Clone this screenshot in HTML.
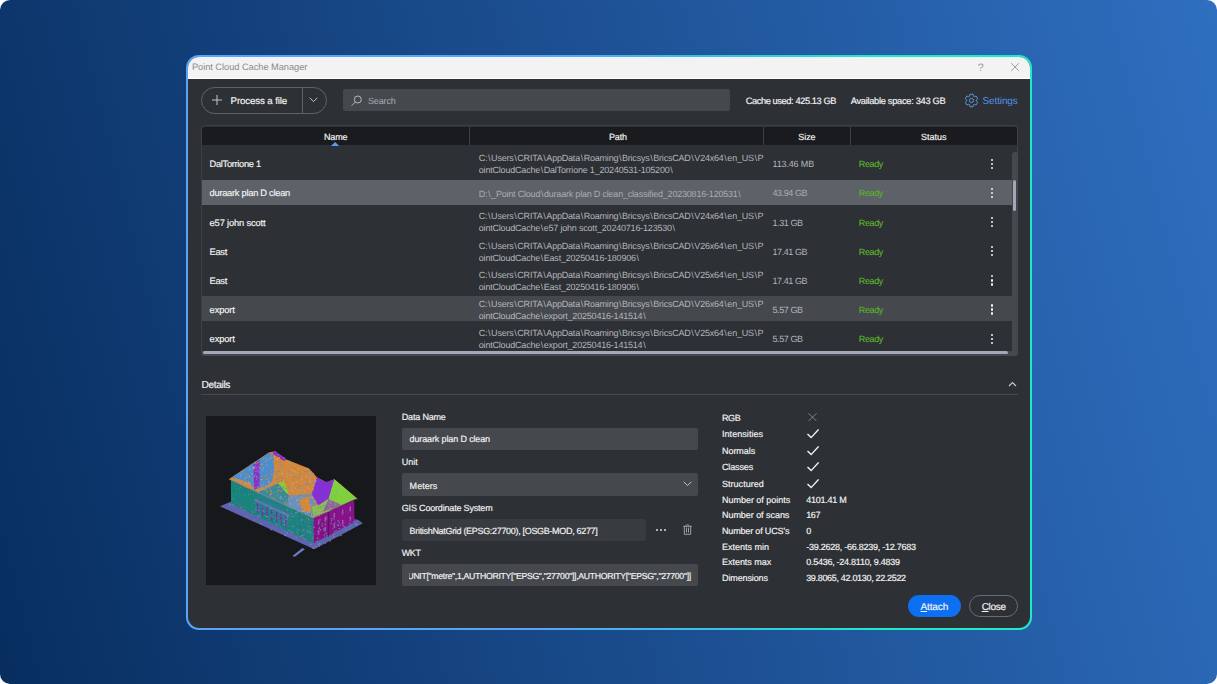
<!DOCTYPE html>
<html lang="en">
<head>
<meta charset="utf-8">
<title>Point Cloud Cache Manager</title>
<style>
*{box-sizing:border-box;margin:0;padding:0}
html,body{width:1217px;height:684px;overflow:hidden;background:#fff}
body{position:relative;font-family:"Liberation Sans",sans-serif;color:#f2f2f2;font-size:9px;text-rendering:geometricPrecision}
.abs,.t{position:absolute}
.t{white-space:nowrap;line-height:12px;height:12px}
.bg{left:0;top:0;width:1216.5px;height:684px;border-radius:10px;background:linear-gradient(76deg,#082e60 0%,#2f6fc0 100%)}
.win{left:186px;top:55px;width:846px;height:575px;border-radius:13px;background:linear-gradient(90deg,#5aa2fa 0%,#58a4f8 42%,#38c0e8 61%,#1eeaca 82%,#1eeaca 100%)}
.inner{position:absolute;left:1.7px;top:1.7px;right:1.7px;bottom:1.6px;border-radius:11.3px;background:#2d3035;overflow:hidden}
.titlebar{left:0;top:0;width:100%;height:22.1px;background:#f3f3f3;border-bottom:1px solid #fff}
.layer{left:0;top:0;width:1217px;height:684px}
.btn{left:201px;top:87.3px;width:126px;height:26.5px;border:1px solid #5f6267;border-radius:14px}
.btn i{position:absolute;left:100px;top:0;width:1px;height:24.5px;background:#5f6267}
.w{color:#f2f2f2;-webkit-text-stroke:0.18px #f2f2f2}
.search{left:342.5px;top:89.3px;width:387.2px;height:21.8px;background:#45484d;border-radius:2px}
.tbl{left:201px;top:125.4px;width:817px;height:230.2px;border:1.1px solid #3d4046;border-radius:3.500px;background:#2d3035;overflow:hidden}
.thead{left:202px;top:126.5px;width:815.2px;height:18.7px;background:#1a1b1e;border-radius:2.500px 2.500px 0 0}
.vsep{top:126.5px;width:1px;height:18.7px;background:#3c3f44}
.rowsel{left:202px;top:180px;width:810.5px;height:25px;background:#5d6168}
.rowhov{left:202px;top:296.2px;width:810.5px;height:25.3px;background:#45484d}
.pt{left:478.8px;font-size:9px;letter-spacing:-0.2px;color:#b3b6bb;line-height:12px;height:auto}
.pt span{margin:0 0.69px}
.kb{left:991.2px;width:3px;height:12px}
.kb b{position:absolute;left:0;width:2.2px;height:2.2px;border-radius:50%;background:#f0f0f0}
u{text-decoration-thickness:0.6px;text-underline-offset:1.2px}
.inp{left:401.5px;width:296.5px;background:#45484d;border-radius:2px}
</style>
</head>
<body>
<div class="abs bg"></div>
<div class="abs win"><div class="inner"><div class="abs titlebar"></div></div></div>
<div class="abs layer">
<div class="t" id="ttl" style="left:191.9px;top:61px;font-size:9.3px;letter-spacing:-0.052px;color:#8b8b8b;">Point Cloud Cache Manager</div>
<div class="t" id="qm" style="left:977.7px;top:62px;font-size:10.8px;color:#979797;">?</div>
<svg class="abs" id="xclose" style="left:1011.4px;top:62.600px" width="8.1" height="8.1" viewBox="0 0 8.4 8.4"><path d="M0.2 0.2L8.2 8.2M8.2 0.2L0.200 8.200" stroke="#858585" stroke-width="0.8" fill="none"/></svg>
<div class="abs btn"><i></i></div>
<svg class="abs" style="left:212.1px;top:95.1px" width="10" height="10" viewBox="0 0 10 10"><path d="M5 0V10M0 5H10" stroke="#cfcfcf" stroke-width="0.95" fill="none"/></svg>
<div class="t w" id="paf" style="left:230.6px;top:96px;font-size:9.7px;letter-spacing:-0.118px;">Process a file</div>
<svg class="abs" style="left:309.1px;top:97.4px" width="9" height="6" viewBox="0 0 9 6"><path d="M0.7 0.8L4.5 4.6L8.3 0.8" stroke="#c8cacd" stroke-width="0.95" fill="none"/></svg>
<div class="abs search"></div>
<svg class="abs" style="left:351.3px;top:94.8px" width="11.5" height="11.5" viewBox="0 0 11.5 11.5"><circle cx="6.8" cy="4.5" r="3.5" stroke="#bcbfc3" stroke-width="0.95" fill="none"/><path d="M4.2 7.1L0.7 10.700" stroke="#bcbfc3" stroke-width="0.95" fill="none"/></svg>
<div class="t" id="srch" style="left:368.0px;top:95px;font-size:9.0px;letter-spacing:-0.139px;color:#a9adb4;">Search</div>
<div class="t w" id="cache" style="left:745.7px;top:95px;font-size:9.3px;letter-spacing:-0.420px;">Cache used: 425.13 GB</div>
<div class="t w" id="avail" style="left:850.8px;top:95px;font-size:9.3px;letter-spacing:-0.307px;">Available space: 343 GB</div>
<svg class="abs" id="gear" style="left:964px;top:92.95px" width="15" height="15" viewBox="0 0 15 15"><path d="M9.43 3.16L9.06 1.24L5.94 1.24L5.57 3.16L4.71 3.66L2.86 3.02L1.30 5.72L2.78 7.00L2.78 8.00L1.30 9.28L2.86 11.98L4.71 11.34L5.57 11.84L5.94 13.76L9.06 13.76L9.43 11.84L10.29 11.34L12.14 11.98L13.70 9.28L12.22 8.00L12.22 7.00L13.70 5.72L12.14 3.02L10.29 3.66Z" fill="none" stroke="#5b9be0" stroke-width="0.95" stroke-linejoin="round"/><circle cx="7.5" cy="7.5" r="2.1" fill="none" stroke="#5b9be0" stroke-width="0.95"/></svg>
<div class="t" id="sett" style="left:982.6px;top:96px;font-size:10px;letter-spacing:-0.143px;color:#4f94e8;">Settings</div>
<div class="abs tbl"></div>
<div class="abs thead"></div>
<div class="abs vsep" style="left:469.1px"></div>
<div class="abs vsep" style="left:763.4px"></div>
<div class="abs vsep" style="left:849.6px"></div>
<div class="t w" id="thName" style="left:324.0px;top:131px;font-size:9.0px;letter-spacing:-0.179px;">Name</div>
<div class="t w" id="thPath" style="left:609.0px;top:131px;font-size:9.0px;letter-spacing:-0.129px;">Path</div>
<div class="t w" id="thSize" style="left:798.3px;top:131px;font-size:9.0px;letter-spacing:-0.079px;">Size</div>
<div class="t w" id="thStatus" style="left:921.0px;top:131px;font-size:9.0px;letter-spacing:-0.019px;">Status</div>
<svg class="abs" style="left:331.4px;top:141.900px" width="8.200" height="4" viewBox="0 0 8.2 4"><path d="M0 4L4.100 0L8.200 4Z" fill="#5a9df0"/></svg>
<div class="abs rowsel"></div><div class="abs rowhov"></div>
<div class="t w" id="nm0" style="left:209.6px;top:158px;font-size:9.3px;letter-spacing:-0.315px;">DalTorrione 1</div>
<div class="t pt" id="pt0" style="top:152.08149999999998px">C:<span>\</span>Users<span>\</span>CRITA<span>\</span>AppData<span>\</span>Roaming<span>\</span>Bricsys<span>\</span>BricsCAD<span>\</span>V24x64<span>\</span>en_US<span>\</span>P<br>ointCloudCache<span>\</span>DalTorrione 1_20240531-105200<span>\</span></div>
<div class="t" id="sz0" style="left:772.5px;top:158px;font-size:9.0px;letter-spacing:-0.153px;color:#b3b6bb;">113.46 MB</div>
<div class="t" id="rd0" style="left:858.8px;top:158px;font-size:9.0px;letter-spacing:-0.363px;color:#5cb02c;-webkit-text-stroke:0.12px #5cb02c;">Ready</div>
<div class="abs kb" style="top:158.65px"><b style="top:0"></b><b style="top:4.1px"></b><b style="top:8.1px"></b></div>
<div class="t w" id="nm1" style="left:209.6px;top:187px;font-size:9.3px;letter-spacing:-0.270px;">duraark plan D clean</div>
<div class="t pt" id="pt1" style="color:#abaeb3;top:187.5315px">D:<span>\</span>_Point Cloud<span>\</span>duraark plan D clean_classified_20230816-120531<span>\</span></div>
<div class="t" id="sz1" style="left:772.5px;top:187px;font-size:9.0px;letter-spacing:-0.420px;color:#abaeb3;">43.94 GB</div>
<div class="t" id="rd1" style="left:858.8px;top:187px;font-size:9.0px;letter-spacing:-0.363px;color:#5cb02c;-webkit-text-stroke:0.12px #5cb02c;">Ready</div>
<div class="abs kb" style="top:187.80px"><b style="top:0"></b><b style="top:4.1px"></b><b style="top:8.1px"></b></div>
<div class="t w" id="nm2" style="left:209.6px;top:217px;font-size:9.3px;letter-spacing:-0.142px;">e57 john scott</div>
<div class="t pt" id="pt2" style="top:210.3815px">C:<span>\</span>Users<span>\</span>CRITA<span>\</span>AppData<span>\</span>Roaming<span>\</span>Bricsys<span>\</span>BricsCAD<span>\</span>V24x64<span>\</span>en_US<span>\</span>P<br>ointCloudCache<span>\</span>e57 john scott_20240716-123530<span>\</span></div>
<div class="t" id="sz2" style="left:772.5px;top:217px;font-size:9.0px;letter-spacing:-0.420px;color:#b3b6bb;">1.31 GB</div>
<div class="t" id="rd2" style="left:858.8px;top:217px;font-size:9.0px;letter-spacing:-0.363px;color:#5cb02c;-webkit-text-stroke:0.12px #5cb02c;">Ready</div>
<div class="abs kb" style="top:216.95px"><b style="top:0"></b><b style="top:4.1px"></b><b style="top:8.1px"></b></div>
<div class="t w" id="nm3" style="left:209.6px;top:246px;font-size:9.3px;letter-spacing:-0.327px;">East</div>
<div class="t pt" id="pt3" style="top:239.53149999999997px">C:<span>\</span>Users<span>\</span>CRITA<span>\</span>AppData<span>\</span>Roaming<span>\</span>Bricsys<span>\</span>BricsCAD<span>\</span>V26x64<span>\</span>en_US<span>\</span>P<br>ointCloudCache<span>\</span>East_20250416-180906<span>\</span></div>
<div class="t" id="sz3" style="left:772.5px;top:246px;font-size:9.0px;letter-spacing:-0.420px;color:#b3b6bb;">17.41 GB</div>
<div class="t" id="rd3" style="left:858.8px;top:246px;font-size:9.0px;letter-spacing:-0.363px;color:#5cb02c;-webkit-text-stroke:0.12px #5cb02c;">Ready</div>
<div class="abs kb" style="top:246.10px"><b style="top:0"></b><b style="top:4.1px"></b><b style="top:8.1px"></b></div>
<div class="t w" id="nm4" style="left:209.6px;top:275px;font-size:9.3px;letter-spacing:-0.327px;">East</div>
<div class="t pt" id="pt4" style="top:268.6815px">C:<span>\</span>Users<span>\</span>CRITA<span>\</span>AppData<span>\</span>Roaming<span>\</span>Bricsys<span>\</span>BricsCAD<span>\</span>V25x64<span>\</span>en_US<span>\</span>P<br>ointCloudCache<span>\</span>East_20250416-180906<span>\</span></div>
<div class="t" id="sz4" style="left:772.5px;top:275px;font-size:9.0px;letter-spacing:-0.420px;color:#b3b6bb;">17.41 GB</div>
<div class="t" id="rd4" style="left:858.8px;top:275px;font-size:9.0px;letter-spacing:-0.363px;color:#5cb02c;-webkit-text-stroke:0.12px #5cb02c;">Ready</div>
<div class="abs kb" style="top:275.25px"><b style="top:0"></b><b style="top:4.1px"></b><b style="top:8.1px"></b></div>
<div class="t w" id="nm5" style="left:209.6px;top:304px;font-size:9.3px;letter-spacing:-0.107px;">export</div>
<div class="t pt" id="pt5" style="top:297.8315px">C:<span>\</span>Users<span>\</span>CRITA<span>\</span>AppData<span>\</span>Roaming<span>\</span>Bricsys<span>\</span>BricsCAD<span>\</span>V26x64<span>\</span>en_US<span>\</span>P<br>ointCloudCache<span>\</span>export_20250416-141514<span>\</span></div>
<div class="t" id="sz5" style="left:772.5px;top:304px;font-size:9.0px;letter-spacing:-0.420px;color:#b3b6bb;">5.57 GB</div>
<div class="t" id="rd5" style="left:858.8px;top:304px;font-size:9.0px;letter-spacing:-0.363px;color:#5cb02c;-webkit-text-stroke:0.12px #5cb02c;">Ready</div>
<div class="abs kb" style="top:304.40px"><b style="top:0"></b><b style="top:4.1px"></b><b style="top:8.1px"></b></div>
<div class="t w" id="nm6" style="left:209.6px;top:333px;font-size:9.3px;letter-spacing:-0.107px;">export</div>
<div class="t pt" id="pt6" style="top:326.9815px">C:<span>\</span>Users<span>\</span>CRITA<span>\</span>AppData<span>\</span>Roaming<span>\</span>Bricsys<span>\</span>BricsCAD<span>\</span>V25x64<span>\</span>en_US<span>\</span>P<br>ointCloudCache<span>\</span>export_20250416-141514<span>\</span></div>
<div class="t" id="sz6" style="left:772.5px;top:333px;font-size:9.0px;letter-spacing:-0.420px;color:#b3b6bb;">5.57 GB</div>
<div class="t" id="rd6" style="left:858.8px;top:333px;font-size:9.0px;letter-spacing:-0.363px;color:#5cb02c;-webkit-text-stroke:0.12px #5cb02c;">Ready</div>
<div class="abs kb" style="top:333.55px"><b style="top:0"></b><b style="top:4.1px"></b><b style="top:8.1px"></b></div>
<div class="abs" style="left:1012.2px;top:151.5px;width:5.6px;height:202px;background:#45484d;border-radius:2.800px 2.800px 0 0"></div>
<div class="abs" style="left:1013.1px;top:179.5px;width:3.1px;height:31.1px;background:#a3a8b8;border-radius:1.600px"></div>
<div class="abs" style="left:202px;top:350.6px;width:815.8px;height:5px;background:#45484d;border-radius:0 0 2.500px 2px"></div>
<div class="abs" style="left:202.9px;top:351.2px;width:805.6px;height:3.3px;background:#a3a8b8;border-radius:1.700px"></div>
<div class="t w" id="det" style="left:201.5px;top:380px;font-size:10.2px;letter-spacing:-0.377px;">Details</div>
<div class="abs" style="left:201px;top:394px;width:817px;height:1px;background:#46494e"></div>
<svg class="abs" style="left:1007.5px;top:381px" width="9" height="6" viewBox="0 0 9 6"><path d="M1 5L4.500 1.500L8 5" stroke="#c8cacd" stroke-width="1.200" fill="none"/></svg>
<div class="abs" style="left:206.2px;top:416px;width:169.6px;height:169px;background:#17181c"></div>
<svg class="abs" id="thumb" style="left:215px;top:445px" width="155" height="115" viewBox="0 0 922 684">
<polygon points="30,365 100,335 850,445 880,465 590,620" fill="#5e64b0"/>
<path d="M460 660L520 612L535 620L475 665Z" fill="#6f78c8"/>
<polygon points="95,210 585,430 585,585 95,350" fill="#178579"/>
<polygon points="585,430 828,330 830,458 588,585" fill="#86128a"/>
<polygon points="235,275 445,372 445,490 235,395" fill="#257f88"/>
<polygon points="235,318 445,415 445,432 235,335" fill="#5a7ab0"/>
<rect x="250" y="345" width="8" height="66" fill="#7a2aa8"/>
<rect x="278" y="358" width="8" height="66" fill="#7a2aa8"/>
<rect x="306" y="371" width="8" height="66" fill="#7a2aa8"/>
<rect x="334" y="384" width="8" height="66" fill="#7a2aa8"/>
<rect x="362" y="397" width="8" height="66" fill="#7a2aa8"/>
<rect x="390" y="410" width="8" height="66" fill="#7a2aa8"/>
<rect x="418" y="423" width="8" height="66" fill="#7a2aa8"/>
<rect x="125" y="240" width="8" height="30" fill="#3a6f9a"/>
<rect x="160" y="255" width="8" height="30" fill="#3a6f9a"/>
<rect x="195" y="272" width="8" height="30" fill="#3a6f9a"/>
<rect x="125" y="300" width="8" height="30" fill="#3a6f9a"/>
<rect x="160" y="315" width="8" height="30" fill="#3a6f9a"/>
<rect x="195" y="332" width="8" height="30" fill="#3a6f9a"/>
<rect x="470" y="410" width="8" height="30" fill="#3a6f9a"/>
<rect x="505" y="425" width="8" height="30" fill="#3a6f9a"/>
<rect x="540" y="442" width="8" height="30" fill="#3a6f9a"/>
<rect x="470" y="470" width="8" height="30" fill="#3a6f9a"/>
<rect x="505" y="487" width="8" height="30" fill="#3a6f9a"/>
<rect x="540" y="503" width="8" height="30" fill="#3a6f9a"/>
<rect x="612" y="445" width="9" height="28" fill="#a85aa8"/>
<rect x="652" y="428" width="9" height="28" fill="#a85aa8"/>
<rect x="705" y="405" width="9" height="28" fill="#a85aa8"/>
<rect x="755" y="385" width="9" height="28" fill="#a85aa8"/>
<rect x="800" y="366" width="9" height="28" fill="#a85aa8"/>
<rect x="612" y="505" width="9" height="28" fill="#a85aa8"/>
<rect x="652" y="488" width="9" height="28" fill="#a85aa8"/>
<rect x="705" y="465" width="9" height="28" fill="#a85aa8"/>
<rect x="755" y="445" width="9" height="28" fill="#a85aa8"/>
<rect x="800" y="426" width="9" height="28" fill="#a85aa8"/>
<rect x="672" y="395" width="6" height="150" fill="#5f0f66"/>
<polygon points="84,202 320,45 358,37 428,87 560,140 606,192 662,221 710,204 843,316 585,432" fill="#d4883c"/>
<polygon points="100,194 320,46 348,60 352,140 340,215 300,248 236,265 205,228 150,206" fill="#4a8ed0"/>
<polygon points="84,202 150,206 205,228 236,268 200,258" fill="#d4883c"/>
<polygon points="227,115 265,88 265,247 233,268" fill="#8a2ecc"/>
<polygon points="338,49 358,37 428,87 407,94" fill="#8a2ecc"/>
<polygon points="373,227 411,213 439,293 421,282" fill="#7ed23c"/>
<polygon points="324,252 373,227 421,282 440,300 430,365 250,282" fill="#3a8a98"/>
<polygon points="440,300 575,291 600,360 585,432 430,365" fill="#6a90c0"/>
<polygon points="500,330 560,300 572,400 520,392" fill="#d4883c"/>
<polygon points="606,193 662,221 710,204 676,319 613,360 575,291" fill="#8430d4"/>
<polygon points="710,204 843,316 752,357 676,319" fill="#7ed23c"/>
<polygon points="575,361 613,361 676,319 711,354 676,395 585,423" fill="#86c050"/>
<polygon points="676,319 752,357 700,376 640,398" fill="#8a6a9a"/>
<rect x="427" y="258" width="6" height="6" fill="#d4883c"/>
<rect x="437" y="238" width="6" height="6" fill="#c07830"/>
<rect x="445" y="280" width="6" height="6" fill="#4a8ed0"/>
<rect x="155" y="157" width="6" height="6" fill="#d4883c"/>
<rect x="493" y="389" width="6" height="6" fill="#9ab0c8"/>
<rect x="436" y="211" width="6" height="6" fill="#d4883c"/>
<rect x="232" y="129" width="6" height="6" fill="#e8a860"/>
<rect x="463" y="299" width="6" height="6" fill="#6aa0d8"/>
<rect x="581" y="198" width="6" height="6" fill="#c07830"/>
<rect x="258" y="151" width="6" height="6" fill="#d4883c"/>
<rect x="166" y="152" width="6" height="6" fill="#d4883c"/>
<rect x="150" y="168" width="6" height="6" fill="#6aa0d8"/>
<rect x="219" y="258" width="6" height="6" fill="#6aa0d8"/>
<rect x="375" y="193" width="6" height="6" fill="#4a8ed0"/>
<rect x="541" y="265" width="6" height="6" fill="#d4883c"/>
<rect x="334" y="154" width="6" height="6" fill="#d4883c"/>
<rect x="364" y="283" width="6" height="6" fill="#4a8ed0"/>
<rect x="520" y="379" width="6" height="6" fill="#4a8ed0"/>
<rect x="560" y="160" width="6" height="6" fill="#4a8ed0"/>
<rect x="542" y="203" width="6" height="6" fill="#d4883c"/>
<rect x="167" y="239" width="6" height="6" fill="#e8a860"/>
<rect x="537" y="153" width="6" height="6" fill="#4a8ed0"/>
<rect x="180" y="226" width="6" height="6" fill="#9ab0c8"/>
<rect x="288" y="213" width="6" height="6" fill="#d4883c"/>
<rect x="426" y="168" width="6" height="6" fill="#9ab0c8"/>
<rect x="616" y="417" width="6" height="6" fill="#d4883c"/>
<rect x="428" y="182" width="6" height="6" fill="#d4883c"/>
<rect x="604" y="393" width="6" height="6" fill="#d4883c"/>
<rect x="400" y="167" width="6" height="6" fill="#9ab0c8"/>
<rect x="435" y="251" width="6" height="6" fill="#c07830"/>
<rect x="540" y="227" width="6" height="6" fill="#4a8ed0"/>
<rect x="363" y="94" width="6" height="6" fill="#c07830"/>
<rect x="238" y="104" width="6" height="6" fill="#e8a860"/>
<rect x="585" y="212" width="6" height="6" fill="#4a8ed0"/>
<rect x="332" y="300" width="6" height="6" fill="#4a8ed0"/>
<rect x="565" y="354" width="6" height="6" fill="#d4883c"/>
<rect x="376" y="267" width="6" height="6" fill="#e8a860"/>
<rect x="170" y="223" width="6" height="6" fill="#4a8ed0"/>
<rect x="479" y="302" width="6" height="6" fill="#9ab0c8"/>
<rect x="517" y="159" width="6" height="6" fill="#d4883c"/>
<rect x="512" y="290" width="6" height="6" fill="#6aa0d8"/>
<rect x="562" y="213" width="6" height="6" fill="#9ab0c8"/>
<rect x="490" y="290" width="6" height="6" fill="#e8a860"/>
<rect x="235" y="225" width="6" height="6" fill="#4a8ed0"/>
<rect x="378" y="215" width="6" height="6" fill="#4a8ed0"/>
<rect x="559" y="396" width="6" height="6" fill="#6aa0d8"/>
<rect x="501" y="295" width="6" height="6" fill="#c07830"/>
<rect x="436" y="294" width="6" height="6" fill="#4a8ed0"/>
<rect x="380" y="72" width="6" height="6" fill="#e8a860"/>
<rect x="492" y="349" width="6" height="6" fill="#e8a860"/>
<rect x="404" y="146" width="6" height="6" fill="#d4883c"/>
<rect x="489" y="308" width="6" height="6" fill="#4a8ed0"/>
<rect x="599" y="211" width="6" height="6" fill="#6aa0d8"/>
<rect x="523" y="309" width="6" height="6" fill="#d4883c"/>
<rect x="252" y="245" width="6" height="6" fill="#e8a860"/>
<rect x="209" y="240" width="6" height="6" fill="#c07830"/>
<rect x="547" y="157" width="6" height="6" fill="#4a8ed0"/>
<rect x="491" y="236" width="6" height="6" fill="#c07830"/>
<rect x="370" y="250" width="6" height="6" fill="#d4883c"/>
<rect x="476" y="195" width="6" height="6" fill="#d4883c"/>
<rect x="391" y="134" width="6" height="6" fill="#6aa0d8"/>
<rect x="180" y="208" width="6" height="6" fill="#d4883c"/>
<rect x="270" y="234" width="6" height="6" fill="#6aa0d8"/>
<rect x="471" y="136" width="6" height="6" fill="#4a8ed0"/>
<rect x="616" y="384" width="6" height="6" fill="#d4883c"/>
<rect x="369" y="200" width="6" height="6" fill="#c07830"/>
<rect x="551" y="250" width="6" height="6" fill="#d4883c"/>
<rect x="563" y="289" width="6" height="6" fill="#c07830"/>
<rect x="248" y="251" width="6" height="6" fill="#c07830"/>
<rect x="646" y="357" width="6" height="6" fill="#4a8ed0"/>
<rect x="324" y="161" width="6" height="6" fill="#4a8ed0"/>
<rect x="281" y="75" width="6" height="6" fill="#d4883c"/>
<rect x="561" y="353" width="6" height="6" fill="#d4883c"/>
<rect x="172" y="237" width="6" height="6" fill="#d4883c"/>
<rect x="716" y="354" width="6" height="6" fill="#6aa0d8"/>
<rect x="503" y="240" width="6" height="6" fill="#c07830"/>
<rect x="449" y="112" width="6" height="6" fill="#d4883c"/>
<rect x="438" y="241" width="6" height="6" fill="#6aa0d8"/>
<rect x="243" y="184" width="6" height="6" fill="#9ab0c8"/>
<rect x="616" y="370" width="6" height="6" fill="#4a8ed0"/>
<rect x="394" y="179" width="6" height="6" fill="#e8a860"/>
<rect x="392" y="114" width="6" height="6" fill="#4a8ed0"/>
<rect x="330" y="71" width="6" height="6" fill="#d4883c"/>
<rect x="619" y="377" width="6" height="6" fill="#9ab0c8"/>
<rect x="229" y="268" width="6" height="6" fill="#e8a860"/>
<rect x="674" y="359" width="6" height="6" fill="#6aa0d8"/>
<rect x="185" y="167" width="6" height="6" fill="#c07830"/>
<rect x="343" y="222" width="6" height="6" fill="#d4883c"/>
<rect x="311" y="122" width="6" height="6" fill="#6aa0d8"/>
<rect x="516" y="248" width="6" height="6" fill="#6aa0d8"/>
<rect x="475" y="234" width="6" height="6" fill="#4a8ed0"/>
<rect x="551" y="329" width="6" height="6" fill="#e8a860"/>
<rect x="421" y="236" width="6" height="6" fill="#d4883c"/>
<rect x="232" y="185" width="6" height="6" fill="#d4883c"/>
<rect x="280" y="146" width="6" height="6" fill="#e8a860"/>
<rect x="501" y="238" width="6" height="6" fill="#c07830"/>
<rect x="568" y="357" width="6" height="6" fill="#d4883c"/>
<rect x="501" y="301" width="6" height="6" fill="#d4883c"/>
<rect x="537" y="207" width="6" height="6" fill="#6aa0d8"/>
<rect x="403" y="245" width="6" height="6" fill="#c07830"/>
<rect x="321" y="247" width="6" height="6" fill="#6aa0d8"/>
<rect x="581" y="258" width="6" height="6" fill="#e8a860"/>
<rect x="588" y="332" width="6" height="6" fill="#d4883c"/>
<rect x="269" y="244" width="6" height="6" fill="#d4883c"/>
<rect x="558" y="217" width="6" height="6" fill="#4a8ed0"/>
<rect x="201" y="181" width="6" height="6" fill="#4a8ed0"/>
<rect x="591" y="217" width="6" height="6" fill="#e8a860"/>
<rect x="569" y="306" width="6" height="6" fill="#e8a860"/>
<rect x="357" y="144" width="6" height="6" fill="#9ab0c8"/>
<rect x="228" y="147" width="6" height="6" fill="#4a8ed0"/>
<rect x="228" y="135" width="6" height="6" fill="#9ab0c8"/>
<rect x="290" y="205" width="6" height="6" fill="#c07830"/>
<rect x="451" y="177" width="6" height="6" fill="#e8a860"/>
<rect x="557" y="341" width="6" height="6" fill="#4a8ed0"/>
<rect x="421" y="332" width="6" height="6" fill="#6aa0d8"/>
<rect x="580" y="428" width="6" height="6" fill="#e8a860"/>
<rect x="580" y="266" width="6" height="6" fill="#6aa0d8"/>
<rect x="452" y="308" width="6" height="6" fill="#e8a860"/>
<rect x="542" y="312" width="6" height="6" fill="#6aa0d8"/>
<rect x="299" y="93" width="6" height="6" fill="#e8a860"/>
<rect x="583" y="166" width="6" height="6" fill="#d4883c"/>
<rect x="329" y="211" width="6" height="6" fill="#c07830"/>
<rect x="325" y="195" width="6" height="6" fill="#9ab0c8"/>
<rect x="359" y="181" width="6" height="6" fill="#e8a860"/>
<rect x="688" y="329" width="6" height="6" fill="#e8a860"/>
<rect x="497" y="261" width="6" height="6" fill="#d4883c"/>
<rect x="578" y="355" width="6" height="6" fill="#d4883c"/>
<rect x="526" y="158" width="6" height="6" fill="#c07830"/>
<rect x="643" y="392" width="6" height="6" fill="#d4883c"/>
<rect x="404" y="318" width="6" height="6" fill="#6aa0d8"/>
<rect x="492" y="322" width="6" height="6" fill="#9ab0c8"/>
<rect x="371" y="72" width="6" height="6" fill="#6aa0d8"/>
<rect x="482" y="317" width="6" height="6" fill="#d4883c"/>
<rect x="379" y="246" width="6" height="6" fill="#e8a860"/>
<rect x="318" y="82" width="6" height="6" fill="#9ab0c8"/>
<rect x="234" y="179" width="6" height="6" fill="#c07830"/>
<rect x="224" y="148" width="6" height="6" fill="#4a8ed0"/>
<rect x="560" y="409" width="6" height="6" fill="#c07830"/>
<rect x="448" y="140" width="6" height="6" fill="#6aa0d8"/>
<rect x="450" y="124" width="6" height="6" fill="#d4883c"/>
<rect x="687" y="343" width="6" height="6" fill="#d4883c"/>
<rect x="443" y="184" width="6" height="6" fill="#d4883c"/>
<rect x="271" y="203" width="6" height="6" fill="#d4883c"/>
<rect x="328" y="139" width="6" height="6" fill="#d4883c"/>
<rect x="351" y="280" width="6" height="6" fill="#c07830"/>
<rect x="158" y="227" width="6" height="6" fill="#6aa0d8"/>
<rect x="496" y="237" width="6" height="6" fill="#d4883c"/>
<rect x="496" y="245" width="6" height="6" fill="#4a8ed0"/>
<rect x="324" y="197" width="6" height="6" fill="#c07830"/>
<rect x="316" y="222" width="6" height="6" fill="#9ab0c8"/>
<rect x="597" y="332" width="6" height="6" fill="#d4883c"/>
<rect x="512" y="218" width="6" height="6" fill="#d4883c"/>
<rect x="630" y="393" width="6" height="6" fill="#4a8ed0"/>
<rect x="304" y="186" width="6" height="6" fill="#c07830"/>
<rect x="370" y="80" width="6" height="6" fill="#e8a860"/>
<rect x="221" y="196" width="6" height="6" fill="#d4883c"/>
<rect x="436" y="315" width="6" height="6" fill="#d4883c"/>
<rect x="256" y="99" width="6" height="6" fill="#d4883c"/>
<rect x="413" y="342" width="6" height="6" fill="#e8a860"/>
<rect x="472" y="293" width="6" height="6" fill="#d4883c"/>
<rect x="557" y="324" width="6" height="6" fill="#c07830"/>
<rect x="335" y="172" width="6" height="6" fill="#9ab0c8"/>
<rect x="419" y="257" width="6" height="6" fill="#4a8ed0"/>
<rect x="471" y="348" width="6" height="6" fill="#d4883c"/>
<rect x="277" y="250" width="6" height="6" fill="#e8a860"/>
<rect x="500" y="176" width="6" height="6" fill="#c07830"/>
<rect x="474" y="264" width="6" height="6" fill="#4a8ed0"/>
<rect x="627" y="367" width="6" height="6" fill="#4a8ed0"/>
<rect x="585" y="344" width="6" height="6" fill="#4a8ed0"/>
<rect x="270" y="265" width="6" height="6" fill="#9ab0c8"/>
<rect x="337" y="73" width="6" height="6" fill="#d4883c"/>
<rect x="358" y="220" width="6" height="6" fill="#d4883c"/>
<rect x="427" y="325" width="6" height="6" fill="#4a8ed0"/>
<rect x="510" y="258" width="6" height="6" fill="#e8a860"/>
<rect x="360" y="103" width="6" height="6" fill="#c07830"/>
<rect x="593" y="328" width="6" height="6" fill="#6aa0d8"/>
<rect x="551" y="290" width="6" height="6" fill="#d4883c"/>
<rect x="439" y="93" width="6" height="6" fill="#6aa0d8"/>
<rect x="174" y="197" width="6" height="6" fill="#e8a860"/>
<rect x="479" y="141" width="6" height="6" fill="#c07830"/>
<rect x="679" y="322" width="6" height="6" fill="#d4883c"/>
<rect x="539" y="223" width="6" height="6" fill="#6aa0d8"/>
<rect x="513" y="198" width="6" height="6" fill="#e8a860"/>
<rect x="394" y="208" width="6" height="6" fill="#c07830"/>
<rect x="335" y="243" width="6" height="6" fill="#6aa0d8"/>
<rect x="538" y="334" width="6" height="6" fill="#e8a860"/>
<rect x="498" y="296" width="6" height="6" fill="#4a8ed0"/>
<rect x="639" y="381" width="6" height="6" fill="#e8a860"/>
<rect x="311" y="165" width="6" height="6" fill="#d4883c"/>
<rect x="419" y="215" width="6" height="6" fill="#c07830"/>
<rect x="386" y="178" width="6" height="6" fill="#c07830"/>
<rect x="259" y="158" width="6" height="6" fill="#6aa0d8"/>
<rect x="241" y="154" width="6" height="6" fill="#9ab0c8"/>
<rect x="443" y="105" width="6" height="6" fill="#9ab0c8"/>
<rect x="233" y="109" width="6" height="6" fill="#4a8ed0"/>
<rect x="465" y="154" width="6" height="6" fill="#e8a860"/>
<rect x="367" y="298" width="6" height="6" fill="#d4883c"/>
<rect x="485" y="247" width="6" height="6" fill="#d4883c"/>
<rect x="492" y="204" width="6" height="6" fill="#c07830"/>
<rect x="296" y="254" width="6" height="6" fill="#4a8ed0"/>
<rect x="327" y="228" width="6" height="6" fill="#d4883c"/>
<rect x="476" y="237" width="6" height="6" fill="#d4883c"/>
<rect x="535" y="342" width="6" height="6" fill="#d4883c"/>
<rect x="418" y="342" width="6" height="6" fill="#d4883c"/>
<rect x="281" y="252" width="6" height="6" fill="#d4883c"/>
<rect x="524" y="234" width="6" height="6" fill="#d4883c"/>
<rect x="124" y="214" width="6" height="6" fill="#4a8ed0"/>
<rect x="331" y="277" width="6" height="6" fill="#c07830"/>
<rect x="461" y="209" width="6" height="6" fill="#6aa0d8"/>
<rect x="633" y="375" width="6" height="6" fill="#d4883c"/>
<rect x="516" y="252" width="6" height="6" fill="#d4883c"/>
<rect x="125" y="205" width="6" height="6" fill="#9ab0c8"/>
<rect x="323" y="282" width="6" height="6" fill="#c07830"/>
<rect x="677" y="339" width="6" height="6" fill="#6aa0d8"/>
<rect x="214" y="138" width="6" height="6" fill="#4a8ed0"/>
<rect x="461" y="297" width="6" height="6" fill="#c07830"/>
<rect x="396" y="181" width="6" height="6" fill="#4a8ed0"/>
<rect x="618" y="415" width="6" height="6" fill="#4a8ed0"/>
<rect x="456" y="338" width="6" height="6" fill="#4a8ed0"/>
<rect x="194" y="217" width="6" height="6" fill="#9ab0c8"/>
<rect x="395" y="245" width="6" height="6" fill="#d4883c"/>
<rect x="382" y="155" width="6" height="6" fill="#6aa0d8"/>
<rect x="308" y="84" width="6" height="6" fill="#d4883c"/>
<rect x="267" y="219" width="6" height="6" fill="#4a8ed0"/>
<rect x="360" y="170" width="6" height="6" fill="#c07830"/>
<rect x="250" y="100" width="6" height="6" fill="#c07830"/>
<rect x="344" y="311" width="6" height="6" fill="#d4883c"/>
<rect x="371" y="56" width="6" height="6" fill="#6aa0d8"/>
<rect x="348" y="110" width="6" height="6" fill="#c07830"/>
<rect x="388" y="272" width="6" height="6" fill="#d4883c"/>
<rect x="318" y="214" width="6" height="6" fill="#9ab0c8"/>
<rect x="600" y="378" width="6" height="6" fill="#4a8ed0"/>
<rect x="494" y="203" width="6" height="6" fill="#d4883c"/>
<rect x="222" y="141" width="6" height="6" fill="#6aa0d8"/>
<rect x="515" y="294" width="6" height="6" fill="#4a8ed0"/>
<rect x="288" y="180" width="6" height="6" fill="#4a8ed0"/>
<rect x="373" y="138" width="6" height="6" fill="#c07830"/>
<rect x="545" y="230" width="6" height="6" fill="#4a8ed0"/>
<rect x="406" y="252" width="6" height="6" fill="#4a8ed0"/>
<rect x="476" y="254" width="6" height="6" fill="#e8a860"/>
<rect x="392" y="190" width="6" height="6" fill="#d4883c"/>
<rect x="354" y="78" width="6" height="6" fill="#e8a860"/>
<rect x="346" y="122" width="6" height="6" fill="#d4883c"/>
<rect x="662" y="331" width="6" height="6" fill="#9ab0c8"/>
<rect x="593" y="400" width="6" height="6" fill="#4a8ed0"/>
<rect x="508" y="177" width="6" height="6" fill="#d4883c"/>
<rect x="152" y="206" width="6" height="6" fill="#6aa0d8"/>
<rect x="458" y="231" width="6" height="6" fill="#e8a860"/>
<rect x="350" y="318" width="6" height="6" fill="#c07830"/>
<rect x="155" y="172" width="6" height="6" fill="#6aa0d8"/>
<rect x="290" y="186" width="6" height="6" fill="#d4883c"/>
<rect x="529" y="222" width="6" height="6" fill="#e8a860"/>
<rect x="367" y="154" width="6" height="6" fill="#d4883c"/>
<rect x="440" y="280" width="6" height="6" fill="#e8a860"/>
<rect x="136" y="220" width="6" height="6" fill="#6aa0d8"/>
<rect x="469" y="159" width="6" height="6" fill="#e8a860"/>
<rect x="544" y="144" width="6" height="6" fill="#e8a860"/>
<rect x="383" y="132" width="6" height="6" fill="#6aa0d8"/>
<rect x="385" y="99" width="6" height="6" fill="#4a8ed0"/>
<rect x="556" y="231" width="6" height="6" fill="#c07830"/>
<rect x="307" y="201" width="6" height="6" fill="#e8a860"/>
<rect x="264" y="135" width="6" height="6" fill="#e8a860"/>
<rect x="620" y="399" width="6" height="6" fill="#9ab0c8"/>
<rect x="427" y="342" width="6" height="6" fill="#6aa0d8"/>
<rect x="397" y="227" width="6" height="6" fill="#e8a860"/>
<rect x="277" y="237" width="6" height="6" fill="#d4883c"/>
<rect x="566" y="182" width="6" height="6" fill="#9ab0c8"/>
<rect x="332" y="169" width="6" height="6" fill="#d4883c"/>
<rect x="239" y="260" width="6" height="6" fill="#4a8ed0"/>
<rect x="515" y="203" width="6" height="6" fill="#9ab0c8"/>
<rect x="288" y="101" width="6" height="6" fill="#4a8ed0"/>
<rect x="370" y="301" width="6" height="6" fill="#4a8ed0"/>
<rect x="579" y="422" width="6" height="6" fill="#6aa0d8"/>
<rect x="563" y="194" width="6" height="6" fill="#9ab0c8"/>
<rect x="175" y="167" width="6" height="6" fill="#d4883c"/>
<rect x="506" y="391" width="6" height="6" fill="#6aa0d8"/>
<rect x="412" y="97" width="6" height="6" fill="#d4883c"/>
<rect x="289" y="262" width="6" height="6" fill="#e8a860"/>
<rect x="559" y="145" width="6" height="6" fill="#4a8ed0"/>
<rect x="503" y="258" width="6" height="6" fill="#4a8ed0"/>
<rect x="319" y="68" width="6" height="6" fill="#4a8ed0"/>
<rect x="339" y="92" width="6" height="6" fill="#d4883c"/>
<rect x="452" y="201" width="6" height="6" fill="#d4883c"/>
<rect x="509" y="257" width="6" height="6" fill="#4a8ed0"/>
<rect x="502" y="296" width="6" height="6" fill="#c07830"/>
<rect x="276" y="112" width="6" height="6" fill="#e8a860"/>
<rect x="319" y="240" width="6" height="6" fill="#d4883c"/>
<rect x="285" y="134" width="6" height="6" fill="#9ab0c8"/>
<rect x="460" y="159" width="6" height="6" fill="#c07830"/>
<rect x="712" y="340" width="6" height="6" fill="#d4883c"/>
<rect x="389" y="316" width="6" height="6" fill="#e8a860"/>
<rect x="468" y="146" width="6" height="6" fill="#e8a860"/>
<rect x="560" y="215" width="6" height="6" fill="#e8a860"/>
<rect x="328" y="74" width="6" height="6" fill="#e8a860"/>
<rect x="246" y="108" width="6" height="6" fill="#d4883c"/>
<rect x="350" y="207" width="6" height="6" fill="#d4883c"/>
<rect x="523" y="164" width="6" height="6" fill="#6aa0d8"/>
<rect x="394" y="316" width="6" height="6" fill="#4a8ed0"/>
<rect x="552" y="173" width="6" height="6" fill="#6aa0d8"/>
<rect x="467" y="261" width="6" height="6" fill="#d4883c"/>
<rect x="465" y="185" width="6" height="6" fill="#c07830"/>
<rect x="519" y="241" width="6" height="6" fill="#d4883c"/>
<rect x="485" y="215" width="6" height="6" fill="#e8a860"/>
<rect x="534" y="272" width="6" height="6" fill="#e8a860"/>
<rect x="199" y="222" width="6" height="6" fill="#e8a860"/>
<rect x="457" y="129" width="6" height="6" fill="#d4883c"/>
<rect x="282" y="110" width="6" height="6" fill="#d4883c"/>
<rect x="491" y="379" width="6" height="6" fill="#4a8ed0"/>
<rect x="418" y="336" width="6" height="6" fill="#4a8ed0"/>
<rect x="220" y="169" width="6" height="6" fill="#e8a860"/>
<rect x="303" y="201" width="6" height="6" fill="#c07830"/>
<rect x="552" y="393" width="6" height="6" fill="#d4883c"/>
<rect x="488" y="162" width="6" height="6" fill="#9ab0c8"/>
<rect x="280" y="173" width="6" height="6" fill="#c07830"/>
<rect x="355" y="114" width="6" height="6" fill="#d4883c"/>
<rect x="357" y="160" width="6" height="6" fill="#6aa0d8"/>
<rect x="286" y="185" width="6" height="6" fill="#c07830"/>
<rect x="394" y="217" width="6" height="6" fill="#c07830"/>
<rect x="474" y="202" width="6" height="6" fill="#6aa0d8"/>
<rect x="524" y="150" width="6" height="6" fill="#d4883c"/>
<rect x="255" y="226" width="6" height="6" fill="#4a8ed0"/>
<rect x="402" y="148" width="6" height="6" fill="#6aa0d8"/>
<rect x="368" y="271" width="6" height="6" fill="#d4883c"/>
<rect x="275" y="203" width="6" height="6" fill="#e8a860"/>
<rect x="583" y="216" width="6" height="6" fill="#4a8ed0"/>
<rect x="151" y="181" width="6" height="6" fill="#e8a860"/>
<rect x="468" y="226" width="6" height="6" fill="#9ab0c8"/>
<rect x="577" y="314" width="6" height="6" fill="#d4883c"/>
<rect x="135" y="220" width="6" height="6" fill="#6aa0d8"/>
<rect x="477" y="268" width="6" height="6" fill="#6aa0d8"/>
<rect x="365" y="93" width="6" height="6" fill="#6aa0d8"/>
<rect x="202" y="184" width="6" height="6" fill="#e8a860"/>
<rect x="491" y="248" width="6" height="6" fill="#d4883c"/>
<rect x="587" y="238" width="6" height="6" fill="#e8a860"/>
<rect x="271" y="200" width="6" height="6" fill="#d4883c"/>
<rect x="370" y="153" width="6" height="6" fill="#c07830"/>
<rect x="572" y="372" width="6" height="6" fill="#d4883c"/>
<rect x="380" y="155" width="6" height="6" fill="#4a8ed0"/>
<rect x="282" y="81" width="6" height="6" fill="#6aa0d8"/>
<rect x="334" y="230" width="6" height="6" fill="#9ab0c8"/>
<rect x="559" y="143" width="6" height="6" fill="#c07830"/>
<rect x="280" y="182" width="6" height="6" fill="#6aa0d8"/>
<rect x="576" y="169" width="6" height="6" fill="#d4883c"/>
<rect x="500" y="195" width="6" height="6" fill="#4a8ed0"/>
<rect x="484" y="327" width="6" height="6" fill="#e8a860"/>
<rect x="538" y="183" width="6" height="6" fill="#e8a860"/>
<rect x="246" y="270" width="6" height="6" fill="#d4883c"/>
<rect x="424" y="210" width="6" height="6" fill="#d4883c"/>
<rect x="636" y="367" width="6" height="6" fill="#d4883c"/>
<rect x="385" y="310" width="6" height="6" fill="#9ab0c8"/>
<rect x="244" y="201" width="6" height="6" fill="#c07830"/>
<rect x="202" y="145" width="6" height="6" fill="#6aa0d8"/>
<rect x="108" y="208" width="6" height="6" fill="#6aa0d8"/>
<rect x="459" y="210" width="6" height="6" fill="#d4883c"/>
<rect x="237" y="174" width="6" height="6" fill="#4a8ed0"/>
<rect x="578" y="186" width="6" height="6" fill="#d4883c"/>
<rect x="479" y="190" width="6" height="6" fill="#c07830"/>
<rect x="531" y="220" width="6" height="6" fill="#d4883c"/>
<rect x="527" y="227" width="6" height="6" fill="#6aa0d8"/>
<rect x="333" y="312" width="6" height="6" fill="#4a8ed0"/>
<rect x="564" y="176" width="6" height="6" fill="#6aa0d8"/>
<rect x="520" y="139" width="6" height="6" fill="#d4883c"/>
<rect x="269" y="121" width="6" height="6" fill="#c07830"/>
<rect x="398" y="247" width="6" height="6" fill="#6aa0d8"/>
<rect x="453" y="128" width="6" height="6" fill="#d4883c"/>
<rect x="555" y="305" width="6" height="6" fill="#c07830"/>
<rect x="503" y="169" width="6" height="6" fill="#4a8ed0"/>
<rect x="355" y="156" width="6" height="6" fill="#4a8ed0"/>
<rect x="235" y="248" width="6" height="6" fill="#c07830"/>
<rect x="345" y="101" width="6" height="6" fill="#4a8ed0"/>
<rect x="526" y="392" width="6" height="6" fill="#e8a860"/>
<rect x="492" y="137" width="6" height="6" fill="#e8a860"/>
<rect x="301" y="259" width="6" height="6" fill="#e8a860"/>
<rect x="452" y="145" width="6" height="6" fill="#e8a860"/>
<rect x="200" y="191" width="6" height="6" fill="#d4883c"/>
<rect x="547" y="252" width="6" height="6" fill="#9ab0c8"/>
<rect x="569" y="158" width="6" height="6" fill="#6aa0d8"/>
<rect x="428" y="183" width="6" height="6" fill="#9ab0c8"/>
<rect x="501" y="264" width="6" height="6" fill="#9ab0c8"/>
<rect x="363" y="177" width="6" height="6" fill="#4a8ed0"/>
<rect x="604" y="375" width="6" height="6" fill="#d4883c"/>
<rect x="416" y="305" width="6" height="6" fill="#d4883c"/>
<rect x="484" y="177" width="6" height="6" fill="#6aa0d8"/>
<rect x="251" y="145" width="6" height="6" fill="#4a8ed0"/>
<rect x="456" y="270" width="6" height="6" fill="#9ab0c8"/>
<rect x="518" y="392" width="6" height="6" fill="#e8a860"/>
<rect x="479" y="266" width="6" height="6" fill="#d4883c"/>
<rect x="248" y="193" width="6" height="6" fill="#4a8ed0"/>
<rect x="393" y="170" width="6" height="6" fill="#e8a860"/>
<rect x="365" y="323" width="6" height="6" fill="#c07830"/>
<rect x="596" y="217" width="6" height="6" fill="#4a8ed0"/>
<rect x="236" y="121" width="6" height="6" fill="#6aa0d8"/>
<rect x="448" y="347" width="6" height="6" fill="#e8a860"/>
<rect x="547" y="272" width="6" height="6" fill="#c07830"/>
<rect x="224" y="129" width="6" height="6" fill="#e8a860"/>
<rect x="471" y="329" width="6" height="6" fill="#4a8ed0"/>
<rect x="596" y="349" width="6" height="6" fill="#c07830"/>
<rect x="466" y="211" width="6" height="6" fill="#d4883c"/>
<rect x="365" y="178" width="6" height="6" fill="#d4883c"/>
<rect x="302" y="271" width="6" height="6" fill="#9ab0c8"/>
<rect x="406" y="100" width="6" height="6" fill="#d4883c"/>
<rect x="367" y="84" width="6" height="6" fill="#e8a860"/>
<rect x="328" y="267" width="6" height="6" fill="#e8a860"/>
<rect x="484" y="250" width="6" height="6" fill="#c07830"/>
<rect x="420" y="354" width="6" height="6" fill="#e8a860"/>
<rect x="206" y="168" width="6" height="6" fill="#c07830"/>
<rect x="164" y="228" width="6" height="6" fill="#c07830"/>
<rect x="433" y="275" width="6" height="6" fill="#d4883c"/>
<rect x="196" y="222" width="6" height="6" fill="#9ab0c8"/>
<rect x="579" y="221" width="6" height="6" fill="#4a8ed0"/>
<rect x="344" y="103" width="6" height="6" fill="#d4883c"/>
<rect x="511" y="309" width="6" height="6" fill="#e8a860"/>
<rect x="558" y="162" width="6" height="6" fill="#e8a860"/>
<rect x="549" y="207" width="6" height="6" fill="#c07830"/>
<rect x="433" y="168" width="6" height="6" fill="#6aa0d8"/>
<rect x="207" y="238" width="6" height="6" fill="#e8a860"/>
<rect x="322" y="256" width="6" height="6" fill="#6aa0d8"/>
<rect x="300" y="75" width="6" height="6" fill="#9ab0c8"/>
<rect x="388" y="234" width="6" height="6" fill="#d4883c"/>
<rect x="564" y="220" width="6" height="6" fill="#d4883c"/>
<rect x="326" y="289" width="6" height="6" fill="#d4883c"/>
<rect x="571" y="420" width="6" height="6" fill="#e8a860"/>
<rect x="527" y="194" width="6" height="6" fill="#d4883c"/>
<rect x="466" y="205" width="6" height="6" fill="#c07830"/>
<rect x="324" y="300" width="6" height="6" fill="#c07830"/>
<rect x="344" y="115" width="6" height="6" fill="#4a8ed0"/>
<rect x="311" y="301" width="6" height="6" fill="#4a8ed0"/>
<rect x="604" y="352" width="6" height="6" fill="#9ab0c8"/>
<rect x="292" y="155" width="6" height="6" fill="#4a8ed0"/>
<rect x="173" y="225" width="6" height="6" fill="#9ab0c8"/>
<rect x="547" y="397" width="6" height="6" fill="#9ab0c8"/>
<rect x="205" y="140" width="6" height="6" fill="#e8a860"/>
<rect x="680" y="382" width="6" height="6" fill="#c07830"/>
<rect x="285" y="232" width="6" height="6" fill="#6aa0d8"/>
<rect x="259" y="281" width="6" height="6" fill="#d4883c"/>
<rect x="324" y="145" width="6" height="6" fill="#4a8ed0"/>
<rect x="333" y="58" width="6" height="6" fill="#d4883c"/>
<rect x="554" y="417" width="6" height="6" fill="#d4883c"/>
<rect x="360" y="208" width="6" height="6" fill="#6aa0d8"/>
<rect x="354" y="245" width="6" height="6" fill="#d4883c"/>
<rect x="569" y="201" width="6" height="6" fill="#6aa0d8"/>
<rect x="410" y="225" width="6" height="6" fill="#6aa0d8"/>
<rect x="571" y="408" width="6" height="6" fill="#e8a860"/>
<rect x="529" y="203" width="6" height="6" fill="#d4883c"/>
<rect x="485" y="112" width="6" height="6" fill="#d4883c"/>
<rect x="231" y="137" width="6" height="6" fill="#d4883c"/>
<rect x="437" y="280" width="6" height="6" fill="#d4883c"/>
<rect x="181" y="205" width="6" height="6" fill="#c07830"/>
<rect x="270" y="262" width="6" height="6" fill="#6aa0d8"/>
<rect x="381" y="222" width="6" height="6" fill="#d4883c"/>
<rect x="242" y="134" width="6" height="6" fill="#9ab0c8"/>
<rect x="453" y="269" width="6" height="6" fill="#e8a860"/>
<rect x="339" y="46" width="6" height="6" fill="#d4883c"/>
<rect x="396" y="195" width="6" height="6" fill="#4a8ed0"/>
<rect x="362" y="210" width="6" height="6" fill="#6aa0d8"/>
<rect x="414" y="120" width="6" height="6" fill="#d4883c"/>
<rect x="396" y="157" width="6" height="6" fill="#d4883c"/>
<rect x="559" y="254" width="6" height="6" fill="#9ab0c8"/>
<rect x="389" y="302" width="6" height="6" fill="#9ab0c8"/>
<rect x="256" y="127" width="6" height="6" fill="#c07830"/>
<rect x="592" y="209" width="6" height="6" fill="#9ab0c8"/>
<rect x="310" y="274" width="6" height="6" fill="#d4883c"/>
<rect x="343" y="318" width="6" height="6" fill="#d4883c"/>
<rect x="408" y="73" width="6" height="6" fill="#6aa0d8"/>
<rect x="252" y="194" width="6" height="6" fill="#4a8ed0"/>
<rect x="361" y="226" width="6" height="6" fill="#e8a860"/>
<rect x="514" y="246" width="6" height="6" fill="#6aa0d8"/>
<rect x="435" y="257" width="6" height="6" fill="#6aa0d8"/>
<rect x="292" y="179" width="6" height="6" fill="#c07830"/>
<rect x="474" y="250" width="6" height="6" fill="#6aa0d8"/>
<rect x="455" y="312" width="6" height="6" fill="#d4883c"/>
<rect x="335" y="284" width="6" height="6" fill="#e8a860"/>
<rect x="444" y="161" width="6" height="6" fill="#6aa0d8"/>
<rect x="298" y="237" width="6" height="6" fill="#e8a860"/>
<rect x="254" y="125" width="6" height="6" fill="#c07830"/>
<rect x="326" y="293" width="6" height="6" fill="#e8a860"/>
<rect x="682" y="387" width="6" height="6" fill="#4a8ed0"/>
<rect x="354" y="316" width="6" height="6" fill="#4a8ed0"/>
<rect x="592" y="373" width="6" height="6" fill="#9ab0c8"/>
<rect x="496" y="267" width="6" height="6" fill="#d4883c"/>
<rect x="330" y="271" width="6" height="6" fill="#d4883c"/>
<rect x="439" y="151" width="6" height="6" fill="#c07830"/>
<rect x="360" y="202" width="6" height="6" fill="#4a8ed0"/>
<rect x="288" y="82" width="6" height="6" fill="#d4883c"/>
<rect x="228" y="252" width="6" height="6" fill="#d4883c"/>
<rect x="421" y="321" width="6" height="6" fill="#4a8ed0"/>
<rect x="398" y="191" width="6" height="6" fill="#c07830"/>
<rect x="286" y="212" width="6" height="6" fill="#c07830"/>
<rect x="489" y="348" width="6" height="6" fill="#d4883c"/>
<rect x="301" y="113" width="6" height="6" fill="#d4883c"/>
<rect x="435" y="184" width="6" height="6" fill="#6aa0d8"/>
<rect x="256" y="266" width="6" height="6" fill="#9ab0c8"/>
<rect x="475" y="159" width="6" height="6" fill="#d4883c"/>
<rect x="304" y="178" width="6" height="6" fill="#d4883c"/>
<rect x="742" y="352" width="6" height="6" fill="#9ab0c8"/>
<rect x="415" y="338" width="6" height="6" fill="#c07830"/>
<rect x="268" y="234" width="6" height="6" fill="#6aa0d8"/>
<rect x="579" y="358" width="6" height="6" fill="#c07830"/>
<rect x="268" y="160" width="6" height="6" fill="#4a8ed0"/>
<rect x="208" y="224" width="6" height="6" fill="#e8a860"/>
<rect x="603" y="379" width="6" height="6" fill="#e8a860"/>
<rect x="225" y="233" width="6" height="6" fill="#d4883c"/>
<rect x="266" y="147" width="6" height="6" fill="#4a8ed0"/>
<rect x="226" y="131" width="6" height="6" fill="#e8a860"/>
<rect x="578" y="310" width="6" height="6" fill="#9ab0c8"/>
<rect x="395" y="269" width="6" height="6" fill="#d4883c"/>
<rect x="366" y="167" width="6" height="6" fill="#4a8ed0"/>
<rect x="573" y="285" width="6" height="6" fill="#6aa0d8"/>
<rect x="554" y="332" width="6" height="6" fill="#d4883c"/>
<rect x="350" y="64" width="6" height="6" fill="#e8a860"/>
<rect x="373" y="71" width="6" height="6" fill="#d4883c"/>
<rect x="189" y="172" width="6" height="6" fill="#d4883c"/>
<rect x="302" y="112" width="6" height="6" fill="#d4883c"/>
<rect x="711" y="350" width="6" height="6" fill="#6aa0d8"/>
<rect x="470" y="190" width="6" height="6" fill="#6aa0d8"/>
<rect x="683" y="373" width="6" height="6" fill="#e8a860"/>
<rect x="184" y="188" width="6" height="6" fill="#9ab0c8"/>
<rect x="284" y="154" width="6" height="6" fill="#4a8ed0"/>
<rect x="653" y="347" width="6" height="6" fill="#9ab0c8"/>
<rect x="561" y="379" width="6" height="6" fill="#e8a860"/>
<rect x="840" y="317" width="6" height="6" fill="#c8a050"/>
<rect x="736" y="297" width="6" height="6" fill="#c8a050"/>
<rect x="816" y="304" width="6" height="6" fill="#c8a050"/>
<rect x="700" y="266" width="6" height="6" fill="#c8a050"/>
<rect x="691" y="323" width="6" height="6" fill="#c8a050"/>
<rect x="686" y="300" width="6" height="6" fill="#60b8a0"/>
<rect x="741" y="245" width="6" height="6" fill="#c8a050"/>
<rect x="720" y="260" width="6" height="6" fill="#c8a050"/>
<rect x="777" y="287" width="6" height="6" fill="#60b8a0"/>
<rect x="709" y="289" width="6" height="6" fill="#60b8a0"/>
<rect x="791" y="300" width="6" height="6" fill="#c8a050"/>
<rect x="756" y="315" width="6" height="6" fill="#60b8a0"/>
<rect x="729" y="265" width="6" height="6" fill="#60b8a0"/>
<rect x="797" y="324" width="6" height="6" fill="#c8a050"/>
<rect x="710" y="298" width="6" height="6" fill="#a0a060"/>
<rect x="709" y="307" width="6" height="6" fill="#60b8a0"/>
<rect x="753" y="330" width="6" height="6" fill="#c8a050"/>
<rect x="719" y="274" width="6" height="6" fill="#60b8a0"/>
<rect x="784" y="277" width="6" height="6" fill="#a0a060"/>
<rect x="687" y="285" width="6" height="6" fill="#a0a060"/>
<rect x="692" y="311" width="6" height="6" fill="#60b8a0"/>
<rect x="747" y="302" width="6" height="6" fill="#a0a060"/>
<rect x="820" y="308" width="6" height="6" fill="#60b8a0"/>
<rect x="724" y="322" width="6" height="6" fill="#c8a050"/>
<rect x="747" y="236" width="6" height="6" fill="#60b8a0"/>
<rect x="756" y="244" width="6" height="6" fill="#c8a050"/>
<rect x="720" y="286" width="6" height="6" fill="#60b8a0"/>
<rect x="777" y="308" width="6" height="6" fill="#c8a050"/>
<rect x="724" y="274" width="6" height="6" fill="#c8a050"/>
<rect x="746" y="247" width="6" height="6" fill="#c8a050"/>
<rect x="332" y="359" width="6" height="6" fill="#1a9488"/>
<rect x="208" y="266" width="6" height="6" fill="#5a78b0"/>
<rect x="247" y="354" width="6" height="6" fill="#127068"/>
<rect x="178" y="263" width="6" height="6" fill="#127068"/>
<rect x="313" y="437" width="6" height="6" fill="#26a090"/>
<rect x="440" y="369" width="6" height="6" fill="#26a090"/>
<rect x="414" y="386" width="6" height="6" fill="#127068"/>
<rect x="245" y="367" width="6" height="6" fill="#26a090"/>
<rect x="509" y="403" width="6" height="6" fill="#3a7aa0"/>
<rect x="452" y="384" width="6" height="6" fill="#26a090"/>
<rect x="214" y="368" width="6" height="6" fill="#1a9488"/>
<rect x="274" y="348" width="6" height="6" fill="#127068"/>
<rect x="343" y="405" width="6" height="6" fill="#3a7aa0"/>
<rect x="484" y="503" width="6" height="6" fill="#1a9488"/>
<rect x="278" y="364" width="6" height="6" fill="#5a78b0"/>
<rect x="155" y="304" width="6" height="6" fill="#1a9488"/>
<rect x="487" y="464" width="6" height="6" fill="#5a78b0"/>
<rect x="218" y="328" width="6" height="6" fill="#26a090"/>
<rect x="541" y="432" width="6" height="6" fill="#26a090"/>
<rect x="355" y="446" width="6" height="6" fill="#3a7aa0"/>
<rect x="268" y="388" width="6" height="6" fill="#127068"/>
<rect x="462" y="418" width="6" height="6" fill="#127068"/>
<rect x="317" y="435" width="6" height="6" fill="#5a78b0"/>
<rect x="251" y="404" width="6" height="6" fill="#1a9488"/>
<rect x="520" y="425" width="6" height="6" fill="#127068"/>
<rect x="250" y="321" width="6" height="6" fill="#5a78b0"/>
<rect x="564" y="494" width="6" height="6" fill="#26a090"/>
<rect x="355" y="365" width="6" height="6" fill="#3a7aa0"/>
<rect x="496" y="490" width="6" height="6" fill="#127068"/>
<rect x="567" y="502" width="6" height="6" fill="#26a090"/>
<rect x="310" y="385" width="6" height="6" fill="#3a7aa0"/>
<rect x="376" y="446" width="6" height="6" fill="#3a7aa0"/>
<rect x="385" y="460" width="6" height="6" fill="#1a9488"/>
<rect x="363" y="434" width="6" height="6" fill="#3a7aa0"/>
<rect x="356" y="428" width="6" height="6" fill="#26a090"/>
<rect x="414" y="445" width="6" height="6" fill="#1a9488"/>
<rect x="176" y="297" width="6" height="6" fill="#26a090"/>
<rect x="157" y="342" width="6" height="6" fill="#127068"/>
<rect x="358" y="340" width="6" height="6" fill="#1a9488"/>
<rect x="484" y="400" width="6" height="6" fill="#5a78b0"/>
<rect x="571" y="472" width="6" height="6" fill="#127068"/>
<rect x="117" y="355" width="6" height="6" fill="#5a78b0"/>
<rect x="550" y="416" width="6" height="6" fill="#1a9488"/>
<rect x="431" y="442" width="6" height="6" fill="#5a78b0"/>
<rect x="181" y="249" width="6" height="6" fill="#26a090"/>
<rect x="280" y="386" width="6" height="6" fill="#26a090"/>
<rect x="316" y="343" width="6" height="6" fill="#1a9488"/>
<rect x="241" y="339" width="6" height="6" fill="#3a7aa0"/>
<rect x="243" y="376" width="6" height="6" fill="#3a7aa0"/>
<rect x="535" y="535" width="6" height="6" fill="#3a7aa0"/>
<rect x="111" y="321" width="6" height="6" fill="#5a78b0"/>
<rect x="299" y="364" width="6" height="6" fill="#1a9488"/>
<rect x="363" y="360" width="6" height="6" fill="#3a7aa0"/>
<rect x="359" y="348" width="6" height="6" fill="#1a9488"/>
<rect x="336" y="352" width="6" height="6" fill="#5a78b0"/>
<rect x="387" y="485" width="6" height="6" fill="#26a090"/>
<rect x="272" y="376" width="6" height="6" fill="#3a7aa0"/>
<rect x="175" y="367" width="6" height="6" fill="#1a9488"/>
<rect x="480" y="419" width="6" height="6" fill="#1a9488"/>
<rect x="143" y="355" width="6" height="6" fill="#5a78b0"/>
<rect x="504" y="545" width="6" height="6" fill="#127068"/>
<rect x="425" y="383" width="6" height="6" fill="#3a7aa0"/>
<rect x="535" y="524" width="6" height="6" fill="#3a7aa0"/>
<rect x="496" y="532" width="6" height="6" fill="#26a090"/>
<rect x="503" y="520" width="6" height="6" fill="#3a7aa0"/>
<rect x="98" y="294" width="6" height="6" fill="#1a9488"/>
<rect x="526" y="501" width="6" height="6" fill="#5a78b0"/>
<rect x="383" y="473" width="6" height="6" fill="#26a090"/>
<rect x="156" y="377" width="6" height="6" fill="#5a78b0"/>
<rect x="366" y="398" width="6" height="6" fill="#127068"/>
<rect x="258" y="364" width="6" height="6" fill="#1a9488"/>
<rect x="561" y="564" width="6" height="6" fill="#127068"/>
<rect x="144" y="254" width="6" height="6" fill="#26a090"/>
<rect x="571" y="479" width="6" height="6" fill="#1a9488"/>
<rect x="158" y="342" width="6" height="6" fill="#3a7aa0"/>
<rect x="390" y="473" width="6" height="6" fill="#127068"/>
<rect x="199" y="295" width="6" height="6" fill="#26a090"/>
<rect x="561" y="557" width="6" height="6" fill="#1a9488"/>
<rect x="511" y="518" width="6" height="6" fill="#3a7aa0"/>
<rect x="553" y="489" width="6" height="6" fill="#26a090"/>
<rect x="116" y="233" width="6" height="6" fill="#1a9488"/>
<rect x="193" y="329" width="6" height="6" fill="#1a9488"/>
<rect x="450" y="511" width="6" height="6" fill="#1a9488"/>
<rect x="579" y="555" width="6" height="6" fill="#127068"/>
<rect x="497" y="432" width="6" height="6" fill="#127068"/>
<rect x="520" y="438" width="6" height="6" fill="#5a78b0"/>
<rect x="422" y="437" width="6" height="6" fill="#26a090"/>
<rect x="565" y="515" width="6" height="6" fill="#1a9488"/>
<rect x="396" y="449" width="6" height="6" fill="#3a7aa0"/>
<rect x="336" y="392" width="6" height="6" fill="#127068"/>
<rect x="513" y="500" width="6" height="6" fill="#127068"/>
<rect x="255" y="342" width="6" height="6" fill="#3a7aa0"/>
<rect x="288" y="313" width="6" height="6" fill="#26a090"/>
<rect x="345" y="344" width="6" height="6" fill="#26a090"/>
<rect x="238" y="393" width="6" height="6" fill="#3a7aa0"/>
<rect x="395" y="472" width="6" height="6" fill="#5a78b0"/>
<rect x="127" y="341" width="6" height="6" fill="#5a78b0"/>
<rect x="561" y="501" width="6" height="6" fill="#3a7aa0"/>
<rect x="160" y="326" width="6" height="6" fill="#1a9488"/>
<rect x="122" y="259" width="6" height="6" fill="#26a090"/>
<rect x="373" y="444" width="6" height="6" fill="#3a7aa0"/>
<rect x="322" y="354" width="6" height="6" fill="#5a78b0"/>
<rect x="222" y="292" width="6" height="6" fill="#5a78b0"/>
<rect x="317" y="370" width="6" height="6" fill="#3a7aa0"/>
<rect x="581" y="543" width="6" height="6" fill="#5a78b0"/>
<rect x="331" y="402" width="6" height="6" fill="#127068"/>
<rect x="472" y="485" width="6" height="6" fill="#1a9488"/>
<rect x="338" y="378" width="6" height="6" fill="#5a78b0"/>
<rect x="548" y="464" width="6" height="6" fill="#26a090"/>
<rect x="518" y="468" width="6" height="6" fill="#5a78b0"/>
<rect x="395" y="443" width="6" height="6" fill="#5a78b0"/>
<rect x="298" y="415" width="6" height="6" fill="#5a78b0"/>
<rect x="245" y="281" width="6" height="6" fill="#1a9488"/>
<rect x="503" y="483" width="6" height="6" fill="#127068"/>
<rect x="240" y="399" width="6" height="6" fill="#1a9488"/>
<rect x="544" y="556" width="6" height="6" fill="#3a7aa0"/>
<rect x="520" y="535" width="6" height="6" fill="#26a090"/>
<rect x="195" y="373" width="6" height="6" fill="#3a7aa0"/>
<rect x="271" y="322" width="6" height="6" fill="#127068"/>
<rect x="215" y="357" width="6" height="6" fill="#5a78b0"/>
<rect x="559" y="470" width="6" height="6" fill="#127068"/>
<rect x="404" y="384" width="6" height="6" fill="#1a9488"/>
<rect x="214" y="387" width="6" height="6" fill="#5a78b0"/>
<rect x="489" y="437" width="6" height="6" fill="#1a9488"/>
<rect x="102" y="316" width="6" height="6" fill="#26a090"/>
<rect x="386" y="451" width="6" height="6" fill="#3a7aa0"/>
<rect x="162" y="324" width="6" height="6" fill="#127068"/>
<rect x="291" y="406" width="6" height="6" fill="#127068"/>
<rect x="504" y="521" width="6" height="6" fill="#127068"/>
<rect x="250" y="286" width="6" height="6" fill="#1a9488"/>
<rect x="470" y="388" width="6" height="6" fill="#127068"/>
<rect x="237" y="372" width="6" height="6" fill="#5a78b0"/>
<rect x="319" y="375" width="6" height="6" fill="#26a090"/>
<rect x="428" y="480" width="6" height="6" fill="#127068"/>
<rect x="154" y="240" width="6" height="6" fill="#1a9488"/>
<rect x="148" y="250" width="6" height="6" fill="#26a090"/>
<rect x="382" y="452" width="6" height="6" fill="#3a7aa0"/>
<rect x="119" y="285" width="6" height="6" fill="#1a9488"/>
<rect x="173" y="292" width="6" height="6" fill="#5a78b0"/>
<rect x="196" y="287" width="6" height="6" fill="#26a090"/>
<rect x="455" y="499" width="6" height="6" fill="#3a7aa0"/>
<rect x="229" y="346" width="6" height="6" fill="#26a090"/>
<rect x="501" y="523" width="6" height="6" fill="#127068"/>
<rect x="400" y="428" width="6" height="6" fill="#5a78b0"/>
<rect x="523" y="459" width="6" height="6" fill="#127068"/>
<rect x="275" y="373" width="6" height="6" fill="#3a7aa0"/>
<rect x="564" y="439" width="6" height="6" fill="#127068"/>
<rect x="382" y="467" width="6" height="6" fill="#3a7aa0"/>
<rect x="479" y="387" width="6" height="6" fill="#127068"/>
<rect x="240" y="384" width="6" height="6" fill="#3a7aa0"/>
<rect x="397" y="416" width="6" height="6" fill="#127068"/>
<rect x="236" y="350" width="6" height="6" fill="#1a9488"/>
<rect x="364" y="344" width="6" height="6" fill="#127068"/>
<rect x="583" y="443" width="6" height="6" fill="#1a9488"/>
<rect x="516" y="416" width="6" height="6" fill="#26a090"/>
<rect x="346" y="344" width="6" height="6" fill="#127068"/>
<rect x="108" y="268" width="6" height="6" fill="#127068"/>
<rect x="574" y="551" width="6" height="6" fill="#1a9488"/>
<rect x="571" y="531" width="6" height="6" fill="#5a78b0"/>
<rect x="326" y="417" width="6" height="6" fill="#3a7aa0"/>
<rect x="732" y="412" width="6" height="6" fill="#8a2890"/>
<rect x="752" y="417" width="6" height="6" fill="#8a2890"/>
<rect x="744" y="454" width="6" height="6" fill="#701070"/>
<rect x="706" y="443" width="6" height="6" fill="#9a2a9a"/>
<rect x="692" y="438" width="6" height="6" fill="#8a2890"/>
<rect x="803" y="449" width="6" height="6" fill="#8a2890"/>
<rect x="782" y="390" width="6" height="6" fill="#8a2890"/>
<rect x="719" y="415" width="6" height="6" fill="#701070"/>
<rect x="734" y="489" width="6" height="6" fill="#701070"/>
<rect x="798" y="442" width="6" height="6" fill="#701070"/>
<rect x="809" y="441" width="6" height="6" fill="#9a2a9a"/>
<rect x="786" y="400" width="6" height="6" fill="#9a2a9a"/>
<rect x="611" y="448" width="6" height="6" fill="#9a2a9a"/>
<rect x="665" y="505" width="6" height="6" fill="#701070"/>
<rect x="662" y="455" width="6" height="6" fill="#8a2890"/>
<rect x="750" y="391" width="6" height="6" fill="#701070"/>
<rect x="674" y="514" width="6" height="6" fill="#701070"/>
<rect x="811" y="453" width="6" height="6" fill="#9a2a9a"/>
<rect x="624" y="522" width="6" height="6" fill="#701070"/>
<rect x="652" y="480" width="6" height="6" fill="#9a2a9a"/>
<rect x="666" y="431" width="6" height="6" fill="#9a2a9a"/>
<rect x="641" y="506" width="6" height="6" fill="#8a2890"/>
<rect x="739" y="394" width="6" height="6" fill="#8a2890"/>
<rect x="718" y="380" width="6" height="6" fill="#701070"/>
<rect x="780" y="480" width="6" height="6" fill="#701070"/>
<rect x="621" y="503" width="6" height="6" fill="#8a2890"/>
<rect x="737" y="443" width="6" height="6" fill="#8a2890"/>
<rect x="634" y="521" width="6" height="6" fill="#701070"/>
<rect x="777" y="393" width="6" height="6" fill="#9a2a9a"/>
<rect x="795" y="351" width="6" height="6" fill="#9a2a9a"/>
<rect x="630" y="473" width="6" height="6" fill="#701070"/>
<rect x="751" y="396" width="6" height="6" fill="#9a2a9a"/>
<rect x="706" y="432" width="6" height="6" fill="#9a2a9a"/>
<rect x="684" y="527" width="6" height="6" fill="#701070"/>
<rect x="754" y="411" width="6" height="6" fill="#8a2890"/>
<rect x="639" y="420" width="6" height="6" fill="#701070"/>
<rect x="659" y="541" width="6" height="6" fill="#701070"/>
<rect x="764" y="395" width="6" height="6" fill="#701070"/>
<rect x="713" y="512" width="6" height="6" fill="#8a2890"/>
<rect x="689" y="530" width="6" height="6" fill="#8a2890"/>
<rect x="760" y="455" width="6" height="6" fill="#8a2890"/>
<rect x="647" y="406" width="6" height="6" fill="#8a2890"/>
<rect x="703" y="518" width="6" height="6" fill="#9a2a9a"/>
<rect x="769" y="365" width="6" height="6" fill="#8a2890"/>
<rect x="821" y="424" width="6" height="6" fill="#9a2a9a"/>
<rect x="772" y="456" width="6" height="6" fill="#9a2a9a"/>
<rect x="596" y="525" width="6" height="6" fill="#9a2a9a"/>
<rect x="725" y="377" width="6" height="6" fill="#8a2890"/>
<rect x="631" y="464" width="6" height="6" fill="#8a2890"/>
<rect x="706" y="436" width="6" height="6" fill="#8a2890"/>
<rect x="509" y="519" width="7" height="7" fill="#3a7a80"/>
<rect x="341" y="392" width="7" height="7" fill="#4a8a90"/>
<rect x="617" y="492" width="7" height="7" fill="#8a8ad8"/>
<rect x="427" y="479" width="7" height="7" fill="#4a8a90"/>
<rect x="395" y="515" width="7" height="7" fill="#4a8a90"/>
<rect x="683" y="566" width="7" height="7" fill="#9a7ab0"/>
<rect x="856" y="463" width="7" height="7" fill="#3a7a80"/>
<rect x="468" y="416" width="7" height="7" fill="#8a8ad8"/>
<rect x="735" y="454" width="7" height="7" fill="#9a7ab0"/>
<rect x="713" y="457" width="7" height="7" fill="#5a6aa8"/>
<rect x="603" y="570" width="7" height="7" fill="#8a8ad8"/>
<rect x="594" y="600" width="7" height="7" fill="#3a7a80"/>
<rect x="524" y="502" width="7" height="7" fill="#9a7ab0"/>
<rect x="644" y="497" width="7" height="7" fill="#8a8ad8"/>
<rect x="473" y="548" width="7" height="7" fill="#4a8a90"/>
<rect x="833" y="468" width="7" height="7" fill="#8a8ad8"/>
<rect x="769" y="483" width="7" height="7" fill="#8a8ad8"/>
<rect x="756" y="492" width="7" height="7" fill="#5a6aa8"/>
<rect x="524" y="404" width="7" height="7" fill="#4a8a90"/>
<rect x="329" y="500" width="7" height="7" fill="#8a8ad8"/>
<rect x="416" y="535" width="7" height="7" fill="#8a8ad8"/>
<rect x="547" y="523" width="7" height="7" fill="#5a6aa8"/>
<rect x="662" y="537" width="7" height="7" fill="#8a8ad8"/>
<rect x="352" y="430" width="7" height="7" fill="#5a6aa8"/>
<rect x="237" y="380" width="7" height="7" fill="#4a8a90"/>
<rect x="254" y="385" width="7" height="7" fill="#8a8ad8"/>
<rect x="821" y="453" width="7" height="7" fill="#9a7ab0"/>
<rect x="512" y="449" width="7" height="7" fill="#5a6aa8"/>
<rect x="555" y="453" width="7" height="7" fill="#3a7a80"/>
<rect x="660" y="522" width="7" height="7" fill="#4a8a90"/>
<rect x="730" y="515" width="7" height="7" fill="#3a7a80"/>
<rect x="729" y="538" width="7" height="7" fill="#4a8a90"/>
<rect x="559" y="514" width="7" height="7" fill="#3a7a80"/>
<rect x="288" y="387" width="7" height="7" fill="#5a6aa8"/>
<rect x="621" y="441" width="7" height="7" fill="#9a7ab0"/>
<rect x="602" y="598" width="7" height="7" fill="#3a7a80"/>
<rect x="97" y="375" width="7" height="7" fill="#3a7a80"/>
<rect x="468" y="531" width="7" height="7" fill="#5a6aa8"/>
<rect x="728" y="446" width="7" height="7" fill="#4a8a90"/>
<rect x="586" y="486" width="7" height="7" fill="#8a8ad8"/>
<rect x="635" y="465" width="7" height="7" fill="#5a6aa8"/>
<rect x="653" y="506" width="7" height="7" fill="#3a7a80"/>
<rect x="515" y="562" width="7" height="7" fill="#3a7a80"/>
<rect x="437" y="417" width="7" height="7" fill="#5a6aa8"/>
<rect x="473" y="418" width="7" height="7" fill="#3a7a80"/>
<rect x="427" y="439" width="7" height="7" fill="#4a8a90"/>
<rect x="776" y="500" width="7" height="7" fill="#9a7ab0"/>
<rect x="798" y="463" width="7" height="7" fill="#8a8ad8"/>
<rect x="730" y="475" width="7" height="7" fill="#8a8ad8"/>
<rect x="654" y="555" width="7" height="7" fill="#3a7a80"/>
<rect x="413" y="532" width="7" height="7" fill="#8a8ad8"/>
<rect x="653" y="580" width="7" height="7" fill="#9a7ab0"/>
<rect x="553" y="465" width="7" height="7" fill="#4a8a90"/>
<rect x="447" y="481" width="7" height="7" fill="#3a7a80"/>
<rect x="805" y="477" width="7" height="7" fill="#4a8a90"/>
<rect x="651" y="525" width="7" height="7" fill="#3a7a80"/>
<rect x="152" y="369" width="7" height="7" fill="#9a7ab0"/>
<rect x="659" y="423" width="7" height="7" fill="#4a8a90"/>
<rect x="186" y="420" width="7" height="7" fill="#4a8a90"/>
<rect x="708" y="512" width="7" height="7" fill="#4a8a90"/>
<rect x="510" y="514" width="7" height="7" fill="#3a7a80"/>
<rect x="746" y="535" width="7" height="7" fill="#8a8ad8"/>
<rect x="362" y="472" width="7" height="7" fill="#8a8ad8"/>
<rect x="349" y="399" width="7" height="7" fill="#3a7a80"/>
<rect x="802" y="496" width="7" height="7" fill="#4a8a90"/>
<rect x="519" y="549" width="7" height="7" fill="#9a7ab0"/>
<rect x="423" y="462" width="7" height="7" fill="#5a6aa8"/>
<rect x="504" y="541" width="7" height="7" fill="#8a8ad8"/>
<rect x="403" y="397" width="7" height="7" fill="#5a6aa8"/>
<rect x="597" y="601" width="7" height="7" fill="#8a8ad8"/>
<rect x="269" y="467" width="7" height="7" fill="#5a6aa8"/>
<rect x="566" y="437" width="7" height="7" fill="#3a7a80"/>
<rect x="545" y="507" width="7" height="7" fill="#9a7ab0"/>
<rect x="515" y="410" width="7" height="7" fill="#3a7a80"/>
<rect x="528" y="527" width="7" height="7" fill="#5a6aa8"/>
<rect x="829" y="479" width="7" height="7" fill="#3a7a80"/>
<rect x="709" y="486" width="7" height="7" fill="#5a6aa8"/>
<rect x="704" y="437" width="7" height="7" fill="#5a6aa8"/>
<rect x="329" y="374" width="7" height="7" fill="#8a8ad8"/>
<rect x="448" y="442" width="7" height="7" fill="#4a8a90"/>
<rect x="236" y="443" width="7" height="7" fill="#5a6aa8"/>
<rect x="688" y="464" width="7" height="7" fill="#4a8a90"/>
<rect x="555" y="514" width="7" height="7" fill="#4a8a90"/>
<rect x="425" y="383" width="7" height="7" fill="#9a7ab0"/>
<rect x="333" y="418" width="7" height="7" fill="#4a8a90"/>
<rect x="461" y="558" width="7" height="7" fill="#3a7a80"/>
<rect x="151" y="358" width="7" height="7" fill="#3a7a80"/>
<rect x="553" y="449" width="7" height="7" fill="#4a8a90"/>
<rect x="132" y="364" width="7" height="7" fill="#3a7a80"/>
<rect x="527" y="449" width="7" height="7" fill="#5a6aa8"/>
<rect x="699" y="494" width="7" height="7" fill="#5a6aa8"/>
<rect x="530" y="461" width="7" height="7" fill="#3a7a80"/>
<rect x="487" y="396" width="7" height="7" fill="#9a7ab0"/>
<rect x="690" y="447" width="7" height="7" fill="#4a8a90"/>
<rect x="439" y="505" width="7" height="7" fill="#8a8ad8"/>
<rect x="177" y="418" width="7" height="7" fill="#4a8a90"/>
<rect x="620" y="583" width="7" height="7" fill="#8a8ad8"/>
<rect x="702" y="529" width="7" height="7" fill="#9a7ab0"/>
<rect x="553" y="513" width="7" height="7" fill="#9a7ab0"/>
<rect x="832" y="449" width="7" height="7" fill="#3a7a80"/>
<rect x="102" y="351" width="7" height="7" fill="#9a7ab0"/>
<rect x="427" y="519" width="7" height="7" fill="#8a8ad8"/>
<rect x="337" y="423" width="7" height="7" fill="#4a8a90"/>
<rect x="742" y="472" width="7" height="7" fill="#4a8a90"/>
<rect x="411" y="472" width="7" height="7" fill="#8a8ad8"/>
<rect x="653" y="468" width="7" height="7" fill="#8a8ad8"/>
<rect x="691" y="435" width="7" height="7" fill="#8a8ad8"/>
<rect x="329" y="384" width="7" height="7" fill="#3a7a80"/>
<rect x="393" y="418" width="7" height="7" fill="#4a8a90"/>
<rect x="717" y="506" width="7" height="7" fill="#4a8a90"/>
<rect x="647" y="532" width="7" height="7" fill="#4a8a90"/>
<rect x="617" y="597" width="7" height="7" fill="#9a7ab0"/>
<rect x="418" y="439" width="7" height="7" fill="#9a7ab0"/>
<rect x="285" y="389" width="7" height="7" fill="#9a7ab0"/>
<rect x="521" y="398" width="7" height="7" fill="#5a6aa8"/>
<rect x="551" y="510" width="7" height="7" fill="#9a7ab0"/>
<rect x="564" y="410" width="7" height="7" fill="#3a7a80"/>
<rect x="533" y="557" width="7" height="7" fill="#9a7ab0"/>
<rect x="644" y="502" width="7" height="7" fill="#4a8a90"/>
<rect x="86" y="351" width="7" height="7" fill="#8a8ad8"/>
<rect x="552" y="550" width="7" height="7" fill="#5a6aa8"/>
<rect x="458" y="422" width="7" height="7" fill="#8a8ad8"/>
<rect x="116" y="384" width="7" height="7" fill="#5a6aa8"/>
<rect x="608" y="509" width="7" height="7" fill="#5a6aa8"/>
<rect x="156" y="360" width="7" height="7" fill="#3a7a80"/>
<rect x="337" y="487" width="7" height="7" fill="#4a8a90"/>
<rect x="688" y="545" width="7" height="7" fill="#5a6aa8"/>
<rect x="461" y="480" width="7" height="7" fill="#8a8ad8"/>
<rect x="518" y="502" width="7" height="7" fill="#4a8a90"/>
<rect x="579" y="607" width="7" height="7" fill="#9a7ab0"/>
<rect x="553" y="439" width="7" height="7" fill="#9a7ab0"/>
<rect x="224" y="395" width="7" height="7" fill="#9a7ab0"/>
<rect x="749" y="519" width="7" height="7" fill="#3a7a80"/>
<rect x="270" y="463" width="7" height="7" fill="#9a7ab0"/>
<rect x="457" y="403" width="7" height="7" fill="#5a6aa8"/>
<rect x="327" y="472" width="7" height="7" fill="#3a7a80"/>
<rect x="736" y="462" width="7" height="7" fill="#5a6aa8"/>
<rect x="245" y="418" width="7" height="7" fill="#5a6aa8"/>
<rect x="356" y="397" width="7" height="7" fill="#5a6aa8"/>
<rect x="607" y="551" width="7" height="7" fill="#8a8ad8"/>
<rect x="613" y="588" width="7" height="7" fill="#8a8ad8"/>
<rect x="512" y="443" width="7" height="7" fill="#8a8ad8"/>
<rect x="316" y="457" width="7" height="7" fill="#4a8a90"/>
<rect x="547" y="431" width="7" height="7" fill="#5a6aa8"/>
<rect x="404" y="398" width="7" height="7" fill="#8a8ad8"/>
<rect x="111" y="371" width="7" height="7" fill="#5a6aa8"/>
<rect x="656" y="436" width="7" height="7" fill="#9a7ab0"/>
<rect x="706" y="546" width="7" height="7" fill="#4a8a90"/>
<rect x="649" y="543" width="7" height="7" fill="#3a7a80"/>
<rect x="569" y="541" width="7" height="7" fill="#3a7a80"/>
<rect x="725" y="472" width="7" height="7" fill="#4a8a90"/>
<rect x="559" y="478" width="7" height="7" fill="#9a7ab0"/>
<rect x="617" y="486" width="7" height="7" fill="#5a6aa8"/>
<rect x="702" y="540" width="7" height="7" fill="#9a7ab0"/>
<rect x="521" y="531" width="7" height="7" fill="#5a6aa8"/>
<rect x="515" y="536" width="7" height="7" fill="#8a8ad8"/>
<rect x="161" y="360" width="7" height="7" fill="#5a6aa8"/>
<rect x="694" y="538" width="7" height="7" fill="#5a6aa8"/>
<rect x="401" y="443" width="7" height="7" fill="#5a6aa8"/>
<rect x="567" y="587" width="7" height="7" fill="#8a8ad8"/>
<rect x="148" y="350" width="7" height="7" fill="#3a7a80"/>
<rect x="624" y="501" width="7" height="7" fill="#9a7ab0"/>
<rect x="376" y="474" width="7" height="7" fill="#4a8a90"/>
<rect x="182" y="405" width="7" height="7" fill="#5a6aa8"/>
<rect x="298" y="430" width="7" height="7" fill="#3a7a80"/>
<rect x="636" y="479" width="7" height="7" fill="#4a8a90"/>
<rect x="477" y="401" width="7" height="7" fill="#8a8ad8"/>
<rect x="507" y="509" width="7" height="7" fill="#3a7a80"/>
<rect x="580" y="446" width="7" height="7" fill="#5a6aa8"/>
<rect x="735" y="493" width="7" height="7" fill="#8a8ad8"/>
<rect x="428" y="419" width="7" height="7" fill="#9a7ab0"/>
<rect x="258" y="444" width="7" height="7" fill="#3a7a80"/>
<rect x="565" y="433" width="7" height="7" fill="#4a8a90"/>
<rect x="336" y="409" width="7" height="7" fill="#4a8a90"/>
<rect x="170" y="380" width="7" height="7" fill="#3a7a80"/>
<rect x="583" y="530" width="7" height="7" fill="#5a6aa8"/>
<rect x="232" y="439" width="7" height="7" fill="#4a8a90"/>
<rect x="531" y="533" width="7" height="7" fill="#3a7a80"/>
<rect x="487" y="441" width="7" height="7" fill="#5a6aa8"/>
<rect x="264" y="418" width="7" height="7" fill="#8a8ad8"/>
<rect x="575" y="551" width="7" height="7" fill="#9a7ab0"/>
<rect x="582" y="610" width="7" height="7" fill="#9a7ab0"/>
<rect x="678" y="559" width="7" height="7" fill="#4a8a90"/>
<rect x="389" y="498" width="7" height="7" fill="#3a7a80"/>
<rect x="633" y="473" width="7" height="7" fill="#3a7a80"/>
<rect x="626" y="583" width="7" height="7" fill="#4a8a90"/>
<rect x="108" y="364" width="7" height="7" fill="#4a8a90"/>
<rect x="302" y="422" width="7" height="7" fill="#8a8ad8"/>
<rect x="616" y="562" width="7" height="7" fill="#3a7a80"/>
<rect x="498" y="549" width="7" height="7" fill="#3a7a80"/>
<rect x="481" y="546" width="7" height="7" fill="#9a7ab0"/>
<rect x="842" y="471" width="7" height="7" fill="#8a8ad8"/>
<rect x="451" y="519" width="7" height="7" fill="#4a8a90"/>
<rect x="407" y="452" width="7" height="7" fill="#8a8ad8"/>
<rect x="555" y="510" width="7" height="7" fill="#4a8a90"/>
<rect x="532" y="453" width="7" height="7" fill="#4a8a90"/>
<rect x="504" y="471" width="7" height="7" fill="#5a6aa8"/>
<rect x="351" y="445" width="7" height="7" fill="#4a8a90"/>
<rect x="661" y="437" width="7" height="7" fill="#3a7a80"/>
<rect x="429" y="456" width="7" height="7" fill="#3a7a80"/>
<rect x="360" y="460" width="7" height="7" fill="#4a8a90"/>
<rect x="456" y="516" width="7" height="7" fill="#8a8ad8"/>
<rect x="490" y="501" width="7" height="7" fill="#8a8ad8"/>
<rect x="252" y="419" width="7" height="7" fill="#8a8ad8"/>
<rect x="760" y="478" width="7" height="7" fill="#8a8ad8"/>
<rect x="417" y="465" width="7" height="7" fill="#3a7a80"/>
<rect x="370" y="464" width="7" height="7" fill="#3a7a80"/>
<rect x="371" y="431" width="7" height="7" fill="#4a8a90"/>
<rect x="171" y="386" width="7" height="7" fill="#9a7ab0"/>
<rect x="818" y="479" width="7" height="7" fill="#5a6aa8"/>
<rect x="451" y="406" width="7" height="7" fill="#9a7ab0"/>
<rect x="485" y="518" width="7" height="7" fill="#9a7ab0"/>
<rect x="328" y="374" width="7" height="7" fill="#9a7ab0"/>
<rect x="353" y="501" width="7" height="7" fill="#5a6aa8"/>
<rect x="460" y="499" width="7" height="7" fill="#5a6aa8"/>
<rect x="425" y="427" width="7" height="7" fill="#9a7ab0"/>
<rect x="564" y="518" width="7" height="7" fill="#8a8ad8"/>
<rect x="322" y="455" width="7" height="7" fill="#4a8a90"/>
<rect x="549" y="481" width="7" height="7" fill="#5a6aa8"/>
<rect x="309" y="424" width="7" height="7" fill="#8a8ad8"/>
<path d="M84 204L585 434L843 318" stroke="#a08a90" stroke-width="5" fill="none" opacity="0.7"/>
</svg>
<div class="t w" id="l1" style="left:401.8px;top:411px;font-size:9.0px;letter-spacing:-0.181px;">Data Name</div>
<div class="abs inp" style="top:428px;height:21.6px"></div>
<div class="t w" id="i1" style="left:409.6px;top:433px;font-size:9.0px;letter-spacing:-0.133px;">duraark plan D clean</div>
<div class="t w" id="l2" style="left:401.8px;top:456px;font-size:9.0px;letter-spacing:0.021px;">Unit</div>
<div class="abs inp" style="top:472.6px;height:23px"></div>
<div class="t w" id="i2" style="left:409.6px;top:480px;font-size:9.0px;letter-spacing:0.047px;">Meters</div>
<svg class="abs" style="left:682.5px;top:481px" width="9" height="6" viewBox="0 0 9 6"><path d="M0.7 0.8L4.5 4.600L8.300 0.8" stroke="#c8cacd" stroke-width="0.95" fill="none"/></svg>
<div class="t w" id="l3" style="left:401.8px;top:502px;font-size:9.0px;letter-spacing:-0.183px;">GIS Coordinate System</div>
<div class="abs inp" style="top:519.1px;height:21.8px;width:244.5px;background:#383b40"></div>
<div class="t w" id="i3" style="left:409.6px;top:525px;font-size:9.0px;letter-spacing:-0.315px;">BritishNatGrid (EPSG:27700), [OSGB-MOD, 6277]</div>
<div class="abs kb" style="left:656.3px;top:529.1px;width:12px;height:3px"><b style="left:0;top:0;background:#d8dadc"></b><b style="left:4px;top:0;background:#d8dadc"></b><b style="left:8px;top:0;background:#d8dadc"></b></div>
<svg class="abs" id="trash" style="left:683px;top:524.2px" width="9" height="11" viewBox="0 0 9 11"><path d="M0.2 2.300H8.800M2.800 2.200C3 0.200 6 0.200 6.200 2.200M1.300 2.300V10.300H7.700V2.300M3.500 3.600V8.500M5.500 3.600V8.500" stroke="#a9adb4" stroke-width="0.9" fill="none"/></svg>
<div class="t w" id="l4" style="left:401.8px;top:547px;font-size:9.0px;letter-spacing:-0.420px;">WKT</div>
<div class="abs inp" style="top:564px;height:21.6px"></div>
<div class="abs" id="wktclip" style="left:409.3px;top:566px;width:286px;height:18px;overflow:hidden">
<div class="t w" id="i4" style="left:-1.9px;top:4px;font-size:8.7px;letter-spacing:-0.303px;">UNIT["metre",1,AUTHORITY["EPSG","27700"]],AUTHORITY["EPSG","27700"]]</div>
</div>
<div class="t w" id="dl0" style="left:722.0px;top:412px;font-size:9.0px;letter-spacing:-0.420px;">RGB</div>
<svg class="abs" style="left:808.2px;top:412.6px" width="9" height="8.4" viewBox="0 0 9 8.4"><path d="M0.3 0.2L8.700 8.200M8.700 0.2L0.300 8.200" stroke="#868a90" stroke-width="0.9" fill="none"/></svg>
<div class="t w" id="dl1" style="left:722.0px;top:428px;font-size:9.0px;letter-spacing:0.052px;">Intensities</div>
<svg class="abs" style="left:806.5px;top:429.2px" width="12.5" height="10" viewBox="0 0 12.5 10"><path d="M0.500 4.900L4.150 8.600L11.600 0.400" stroke="#f4f4f4" stroke-width="1.400" fill="none"/></svg>
<div class="t w" id="dl2" style="left:722.0px;top:445px;font-size:9.0px;letter-spacing:-0.045px;">Normals</div>
<svg class="abs" style="left:806.5px;top:445.8px" width="12.5" height="10" viewBox="0 0 12.5 10"><path d="M0.500 4.900L4.150 8.600L11.600 0.400" stroke="#f4f4f4" stroke-width="1.400" fill="none"/></svg>
<div class="t w" id="dl3" style="left:722.0px;top:461px;font-size:9.0px;letter-spacing:-0.145px;">Classes</div>
<svg class="abs" style="left:806.5px;top:462.1px" width="12.5" height="10" viewBox="0 0 12.5 10"><path d="M0.500 4.900L4.150 8.600L11.600 0.400" stroke="#f4f4f4" stroke-width="1.400" fill="none"/></svg>
<div class="t w" id="dl4" style="left:722.0px;top:478px;font-size:9.0px;letter-spacing:0.027px;">Structured</div>
<svg class="abs" style="left:806.5px;top:478.9px" width="12.5" height="10" viewBox="0 0 12.5 10"><path d="M0.500 4.900L4.150 8.600L11.600 0.400" stroke="#f4f4f4" stroke-width="1.400" fill="none"/></svg>
<div class="t w" id="dl5" style="left:722.0px;top:494px;font-size:9.0px;letter-spacing:-0.022px;">Number of points</div>
<div class="t w" id="dv5" style="left:806.2px;top:494px;font-size:9.0px;letter-spacing:-0.237px;">4101.41 M</div>
<div class="t w" id="dl6" style="left:722.0px;top:509px;font-size:9.0px;letter-spacing:-0.049px;">Number of scans</div>
<div class="t w" id="dv6" style="left:806.2px;top:509px;font-size:9.0px;letter-spacing:-0.410px;">167</div>
<div class="t w" id="dl7" style="left:722.0px;top:525px;font-size:9.0px;letter-spacing:-0.171px;">Number of UCS’s</div>
<div class="t w" id="dv7" style="left:806.2px;top:525px;font-size:9.0px;letter-spacing:-0.316px;">0</div>
<div class="t w" id="dl8" style="left:722.0px;top:541px;font-size:9.0px;letter-spacing:0.006px;">Extents min</div>
<div class="t w" id="dv8" style="left:806.2px;top:541px;font-size:9.0px;letter-spacing:-0.253px;">-39.2628, -66.8239, -12.7683</div>
<div class="t w" id="dl9" style="left:722.0px;top:556px;font-size:9.0px;letter-spacing:-0.030px;">Extents max</div>
<div class="t w" id="dv9" style="left:806.2px;top:556px;font-size:9.0px;letter-spacing:-0.263px;">0.5436, -24.8110, 9.4839</div>
<div class="t w" id="dl10" style="left:722.0px;top:572px;font-size:9.0px;letter-spacing:-0.123px;">Dimensions</div>
<div class="t w" id="dv10" style="left:806.2px;top:572px;font-size:9.0px;letter-spacing:-0.320px;">39.8065, 42.0130, 22.2522</div>
<div class="abs" style="left:907.7px;top:594.9px;width:53.4px;height:22.5px;border-radius:11.5px;background:#0d6ff2"></div>
<div class="t w" id="att" style="left:920.5px;top:602px;font-size:10px;letter-spacing:-0.127px;"><u>A</u>ttach</div>
<div class="abs" style="left:968.9px;top:594.9px;width:49.1px;height:22.5px;border-radius:11.5px;border:1px solid #686b70"></div>
<div class="t w" id="cls" style="left:981.7px;top:602px;font-size:10px;letter-spacing:-0.319px;"><u>C</u>lose</div>
</div>
</body>
</html>
